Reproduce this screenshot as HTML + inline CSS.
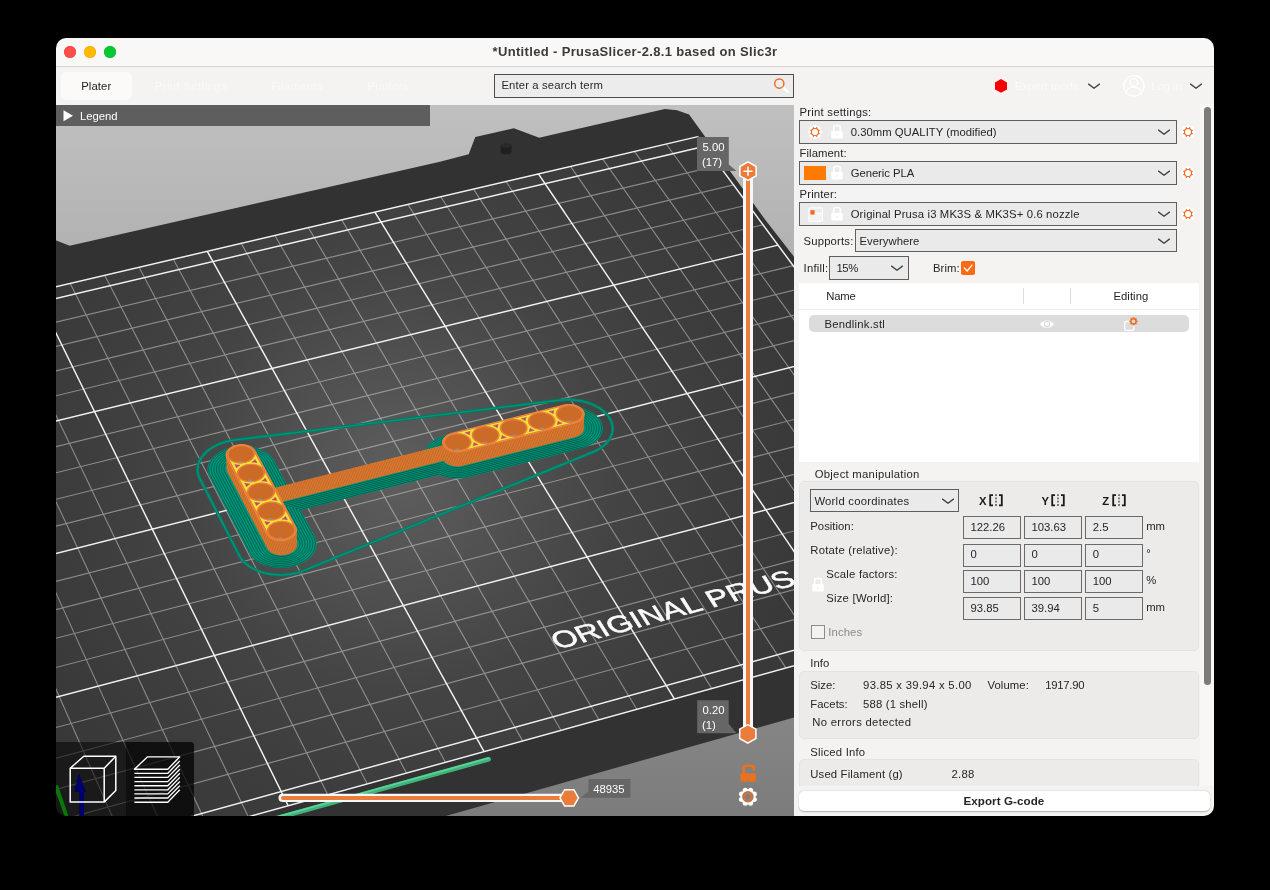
<!DOCTYPE html><html><head><meta charset="utf-8"><title>PrusaSlicer</title>
<style>

html,body{margin:0;padding:0;background:#000;}
body{width:1270px;height:890px;position:relative;overflow:hidden;font-family:"Liberation Sans",sans-serif;font-size:11.3px;color:#262626;}
#win{position:absolute;left:0;top:0;width:1270px;height:890px;will-change:transform;clip-path:inset(38px 56px 74px 56px round 10px);}
#frame{position:absolute;left:56px;top:38px;width:1158px;height:778px;background:#f4f3f2;}
.abs{position:absolute;white-space:nowrap;}
.box{position:absolute;box-sizing:border-box;border:1px solid #5e5e5e;background:#eaeaea;}
.grp{position:absolute;box-sizing:border-box;border:1px solid #e4e3e2;background:#ecebea;border-radius:5px;}

</style></head><body>
<div id="win">
<div id="frame"></div>
<div class="abs" style="left:56px;top:38px;width:1158px;height:28px;background:#f9f8f7;"></div>
<div class="abs" style="left:56px;top:66px;width:1158px;height:1px;background:#d4d3d2;"></div>
<div class="abs" style="left:63.9px;top:45.8px;width:12px;height:12px;border-radius:50%;background:#ff4d4a;box-shadow:inset 0 0 0 0.5px #e83e3b;"></div>
<div class="abs" style="left:83.9px;top:45.8px;width:12px;height:12px;border-radius:50%;background:#ffb900;box-shadow:inset 0 0 0 0.5px #eaa800;"></div>
<div class="abs" style="left:104.1px;top:45.8px;width:12px;height:12px;border-radius:50%;background:#05c832;box-shadow:inset 0 0 0 0.5px #03b52b;"></div>
<div class="abs" style="left:492.5px;top:45px;font-size:13.00px;line-height:14px;color:#3a3a3a;font-weight:bold;letter-spacing:0.345px;">*Untitled - PrusaSlicer-2.8.1 based on Slic3r</div>
<div class="abs" style="left:61.3px;top:72.2px;width:70.5px;height:27.6px;border-radius:5px;background:#fbfaf9;"></div>
<div class="abs" style="left:81.2px;top:79px;font-size:11.30px;line-height:14px;color:#222;letter-spacing:0.113px;">Plater</div>
<div class="abs" style="left:155.0px;top:79px;font-size:11.30px;line-height:14px;color:#faf9f8;letter-spacing:0.342px;">Print Settings</div>
<div class="abs" style="left:271.5px;top:79px;font-size:11.30px;line-height:14px;color:#faf9f8;letter-spacing:0.224px;">Filaments</div>
<div class="abs" style="left:367.5px;top:79px;font-size:11.30px;line-height:14px;color:#faf9f8;letter-spacing:0.258px;">Printers</div>
<div class="box" style="left:494.2px;top:74px;width:299.6px;height:23.6px;border-color:#4d4d4d;background:#ececec;"></div>
<div class="abs" style="left:501.4px;top:78px;font-size:11.30px;line-height:14px;color:#2a2a2a;letter-spacing:0.135px;">Enter a search term</div>
<svg class="abs" style="left:770px;top:75px" width="22" height="22" viewBox="0 0 22 22"><path d="M12.6 12 L17.6 16.6" stroke="#ffffff" stroke-width="2.6" stroke-linecap="round"/><circle cx="9.3" cy="8.6" r="4.6" fill="none" stroke="#ed6b21" stroke-width="1.4"/></svg>
<svg class="abs" style="left:0;top:0" width="1270" height="110" viewBox="0 0 1270 110"><polygon points="1001.0,79.0 995.0,82.5 995.0,89.4 1001.0,92.8 1007.0,89.4 1007.0,82.5" fill="#f80000"/><circle cx="1133.9" cy="85.9" r="10.2" fill="none" stroke="#ffffff" stroke-width="1.3"/><circle cx="1133.9" cy="82.6" r="3.9" fill="none" stroke="#ffffff" stroke-width="1.3"/><path d="M1126.2 92.6 A7.8 6.6 0 0 1 1141.6 92.6" fill="none" stroke="#ffffff" stroke-width="1.3"/></svg>
<div class="abs" style="left:1014.8px;top:79px;font-size:11.30px;line-height:14px;color:#fbfaf9;letter-spacing:0.058px;">Expert mode</div>
<svg class="abs" style="left:1087.7px;top:83.0px" width="12" height="7" viewBox="0 0 12 7"><path d="M0.6 1.1 L6 5.3 L11.4 1.1" fill="none" stroke="#444444" stroke-width="1.35" stroke-linecap="round" stroke-linejoin="round"/></svg>
<div class="abs" style="left:1151.3px;top:79px;font-size:11.30px;line-height:14px;color:#fbfaf9;letter-spacing:0.002px;">Log in</div>
<svg class="abs" style="left:1189.7px;top:83.0px" width="12" height="7" viewBox="0 0 12 7"><path d="M0.6 1.1 L6 5.3 L11.4 1.1" fill="none" stroke="#444444" stroke-width="1.35" stroke-linecap="round" stroke-linejoin="round"/></svg>
<svg id="gl" width="738" height="711" viewBox="56 105 738 711" style="position:absolute;left:56px;top:105px;display:block">
<defs>
<linearGradient id="bg" x1="0" y1="0" x2="0" y2="1"><stop offset="0" stop-color="#c0c0c0"/><stop offset="1" stop-color="#7c7c7c"/></linearGradient>
<radialGradient id="gridg" gradientUnits="userSpaceOnUse" cx="400" cy="475" r="430"><stop offset="0" stop-color="#5e5e5e"/><stop offset="0.25" stop-color="#515151"/><stop offset="0.5" stop-color="#444444"/><stop offset="0.75" stop-color="#3d3d3d"/><stop offset="1" stop-color="#383838"/></radialGradient>
<clipPath id="gridclip"><polygon points="86.3,861.6 1039.0,598.1 697.8,136.6 -140.8,332.7"/></clipPath>
</defs>
<rect x="56" y="105" width="738" height="711" fill="url(#bg)"/>
<polygon points="40.0,240.6 56.3,240.6 69.7,245.7 440.0,161.8 468.7,154.3 475.3,137.1 513.9,128.3 539.2,137.7 664.9,108.9 677.0,110.2 689.1,114.6 704.6,136.0 765.4,220.0 800.0,264.5 800.0,715.9 440.0,817.6 436.0,830.0 40.0,830.0" fill="#323232"/>
<path d="M500.6 145.5 L500.6 152 A5.5 2.3 0 0 0 511.6 152 L511.6 145.5 Z" fill="#1f1f1f"/>
<ellipse cx="506.1" cy="145.5" rx="5.5" ry="2.3" fill="#292929"/>
<polygon points="86.3,861.6 1039.0,598.1 697.8,136.6 -140.8,332.7" fill="url(#gridg)"/>
<path d="M127.2 850.3 L-105.2 324.4M167.8 839.1 L-69.8 316.1M208.2 827.9 L-34.5 307.8M248.3 816.8 L0.6 299.6M327.8 794.8 L70.2 283.4M367.3 783.9 L104.7 275.3M406.4 773.1 L139.1 267.3M445.4 762.3 L173.3 259.3M522.6 740.9 L241.2 243.4M560.9 730.3 L274.9 235.5M599.0 719.8 L308.4 227.7M636.8 709.3 L341.7 219.9M711.8 688.6 L407.9 204.4M749.0 678.3 L440.8 196.7M786.0 668.1 L473.5 189.1M822.7 657.9 L506.0 181.5M895.6 637.7 L570.6 166.4M931.8 627.7 L602.6 158.9M967.7 617.8 L634.5 151.4M1003.4 607.9 L666.2 144.0M67.6 818.1 L1011.1 560.4M55.4 789.6 L992.9 535.8M43.4 761.6 L975.0 511.5M31.5 734.0 L957.3 487.5M8.3 680.0 L922.6 440.7M-3.0 653.6 L905.6 417.7M-14.1 627.7 L888.9 395.1M-25.1 602.1 L872.4 372.8M-46.6 552.0 L840.1 329.0M-57.2 527.5 L824.3 307.6M-67.5 503.3 L808.6 286.5M-77.8 479.5 L793.2 265.6M-97.8 432.9 L763.0 224.8M-107.6 410.1 L748.2 204.7M-117.2 387.6 L733.6 184.9M-126.8 365.4 L719.1 165.4" stroke="#ffffff" stroke-opacity="0.4" stroke-width="1.12" fill="none"/>
<path d="M86.3 861.6 L-140.8 332.7M288.2 805.8 L35.5 291.5M484.1 751.6 L207.3 251.3M674.4 698.9 L374.9 212.1M859.3 647.8 L538.4 173.9M1039.0 598.1 L697.8 136.6M80.1 847.0 L1029.6 585.4M19.8 706.8 L939.8 463.9M-36.0 576.8 L856.1 350.8M-87.8 456.1 L778.0 245.1M-136.2 343.5 L704.9 146.2M86.3 861.6 L1039.0 598.1M-140.8 332.7 L697.8 136.6" stroke="#f2f2f2" stroke-width="1.45" fill="none"/>
<path d="M297.7 572.6 L295.9 573.1 L294.9 573.3 L293.0 573.7 L292.1 573.9 L290.1 574.2 L289.2 574.3 L287.2 574.6 L286.2 574.7 L284.2 574.8 L283.2 574.8 L281.3 574.9 L280.3 574.9 L278.3 574.9 L277.3 574.8 L275.3 574.7 L274.4 574.6 L272.4 574.4 L271.4 574.3 L269.5 574.0 L268.6 573.8 L266.7 573.5 L265.8 573.2 L263.9 572.8 L263.0 572.5 L261.2 572.0 L260.4 571.7 L258.7 571.1 L257.8 570.7 L256.2 570.1 L255.3 569.7 L253.8 568.9 L253.0 568.5 L251.5 567.7 L250.8 567.2 L249.4 566.3 L248.7 565.8 L247.4 564.9 L246.8 564.4 L245.6 563.4 L245.0 562.8 L243.9 561.8 L243.3 561.2 L242.4 560.1 L241.9 559.5 L241.0 558.3 L240.6 557.7 L239.8 556.5 L239.5 555.9 L239.2 555.3 L199.8 478.6 L199.5 478.1 L199.3 477.4 L198.8 476.2 L198.6 475.6 L198.2 474.4 L198.0 473.8 L197.8 472.5 L197.7 471.9 L197.6 470.6 L197.6 470.0 L197.6 468.7 L197.6 468.1 L197.8 466.9 L197.9 466.2 L198.1 465.0 L198.3 464.3 L198.7 463.1 L198.9 462.5 L199.4 461.3 L199.7 460.6 L200.3 459.4 L200.7 458.8 L201.4 457.7 L201.8 457.1 L202.7 455.9 L203.1 455.4 L204.1 454.3 L204.6 453.7 L205.7 452.6 L206.2 452.1 L207.4 451.1 L208.0 450.6 L209.3 449.6 L209.9 449.1 L211.3 448.2 L212.0 447.8 L213.4 446.9 L214.2 446.5 L215.7 445.7 L216.5 445.3 L218.0 444.6 L218.9 444.2 L220.5 443.6 L221.4 443.3 L223.1 442.7 L223.9 442.4 L225.7 441.9 L226.6 441.6 L228.4 441.2 L229.3 441.0 L231.1 440.6 L232.1 440.4 L233.9 440.1 L234.9 440.0 L235.4 439.9 L560.2 400.2 L561.5 400.1 L562.5 400.0 L564.3 399.8 L565.3 399.8 L567.1 399.7 L568.1 399.7 L570.0 399.8 L570.9 399.8 L572.8 399.9 L573.7 400.0 L575.6 400.2 L576.5 400.3 L578.4 400.5 L579.3 400.7 L581.1 401.0 L582.0 401.2 L583.8 401.6 L584.7 401.9 L586.4 402.4 L587.3 402.6 L589.0 403.2 L589.8 403.5 L591.4 404.1 L592.3 404.5 L593.8 405.2 L594.6 405.5 L596.1 406.3 L596.8 406.7 L598.3 407.5 L599.0 407.9 L600.3 408.8 L601.0 409.3 L602.2 410.2 L602.8 410.7 L604.0 411.7 L604.5 412.2 L605.6 413.2 L606.1 413.7 L607.1 414.8 L607.5 415.4 L608.4 416.5 L608.8 417.0 L609.5 418.2 L609.9 418.8 L610.5 419.9 L610.8 420.5 L611.3 421.7 L611.5 422.3 L611.9 423.5 L612.0 424.1 L612.3 425.4 L612.4 426.0 L612.6 427.2 L612.6 427.8 L612.6 429.0 L612.6 429.7 L612.5 430.9 L612.4 431.5 L612.2 432.7 L612.0 433.3 L611.7 434.5 L611.5 435.2 L611.0 436.3 L610.7 436.9 L610.1 438.1 L609.8 438.7 L609.1 439.8 L608.7 440.4 L607.9 441.5 L607.4 442.0 L606.5 443.1 L606.0 443.6 L605.0 444.6 L604.4 445.1 L603.3 446.1 L602.7 446.6 L601.4 447.5 L600.8 447.9 L599.4 448.8 L598.7 449.2 L597.3 450.0 L596.6 450.4 L595.1 451.1 L594.3 451.5 L593.2 451.9 L304.5 570.3 L304.0 570.5 L303.1 570.8 L301.4 571.5 L300.5 571.8 L298.7 572.3Z" fill="none" stroke="#007a63" stroke-width="3.2" stroke-linejoin="round"/>
<path d="M297.7 572.6 L295.9 573.1 L294.9 573.3 L293.0 573.7 L292.1 573.9 L290.1 574.2 L289.2 574.3 L287.2 574.6 L286.2 574.7 L284.2 574.8 L283.2 574.8 L281.3 574.9 L280.3 574.9 L278.3 574.9 L277.3 574.8 L275.3 574.7 L274.4 574.6 L272.4 574.4 L271.4 574.3 L269.5 574.0 L268.6 573.8 L266.7 573.5 L265.8 573.2 L263.9 572.8 L263.0 572.5 L261.2 572.0 L260.4 571.7 L258.7 571.1 L257.8 570.7 L256.2 570.1 L255.3 569.7 L253.8 568.9 L253.0 568.5 L251.5 567.7 L250.8 567.2 L249.4 566.3 L248.7 565.8 L247.4 564.9 L246.8 564.4 L245.6 563.4 L245.0 562.8 L243.9 561.8 L243.3 561.2 L242.4 560.1 L241.9 559.5 L241.0 558.3 L240.6 557.7 L239.8 556.5 L239.5 555.9 L239.2 555.3 L199.8 478.6 L199.5 478.1 L199.3 477.4 L198.8 476.2 L198.6 475.6 L198.2 474.4 L198.0 473.8 L197.8 472.5 L197.7 471.9 L197.6 470.6 L197.6 470.0 L197.6 468.7 L197.6 468.1 L197.8 466.9 L197.9 466.2 L198.1 465.0 L198.3 464.3 L198.7 463.1 L198.9 462.5 L199.4 461.3 L199.7 460.6 L200.3 459.4 L200.7 458.8 L201.4 457.7 L201.8 457.1 L202.7 455.9 L203.1 455.4 L204.1 454.3 L204.6 453.7 L205.7 452.6 L206.2 452.1 L207.4 451.1 L208.0 450.6 L209.3 449.6 L209.9 449.1 L211.3 448.2 L212.0 447.8 L213.4 446.9 L214.2 446.5 L215.7 445.7 L216.5 445.3 L218.0 444.6 L218.9 444.2 L220.5 443.6 L221.4 443.3 L223.1 442.7 L223.9 442.4 L225.7 441.9 L226.6 441.6 L228.4 441.2 L229.3 441.0 L231.1 440.6 L232.1 440.4 L233.9 440.1 L234.9 440.0 L235.4 439.9 L560.2 400.2 L561.5 400.1 L562.5 400.0 L564.3 399.8 L565.3 399.8 L567.1 399.7 L568.1 399.7 L570.0 399.8 L570.9 399.8 L572.8 399.9 L573.7 400.0 L575.6 400.2 L576.5 400.3 L578.4 400.5 L579.3 400.7 L581.1 401.0 L582.0 401.2 L583.8 401.6 L584.7 401.9 L586.4 402.4 L587.3 402.6 L589.0 403.2 L589.8 403.5 L591.4 404.1 L592.3 404.5 L593.8 405.2 L594.6 405.5 L596.1 406.3 L596.8 406.7 L598.3 407.5 L599.0 407.9 L600.3 408.8 L601.0 409.3 L602.2 410.2 L602.8 410.7 L604.0 411.7 L604.5 412.2 L605.6 413.2 L606.1 413.7 L607.1 414.8 L607.5 415.4 L608.4 416.5 L608.8 417.0 L609.5 418.2 L609.9 418.8 L610.5 419.9 L610.8 420.5 L611.3 421.7 L611.5 422.3 L611.9 423.5 L612.0 424.1 L612.3 425.4 L612.4 426.0 L612.6 427.2 L612.6 427.8 L612.6 429.0 L612.6 429.7 L612.5 430.9 L612.4 431.5 L612.2 432.7 L612.0 433.3 L611.7 434.5 L611.5 435.2 L611.0 436.3 L610.7 436.9 L610.1 438.1 L609.8 438.7 L609.1 439.8 L608.7 440.4 L607.9 441.5 L607.4 442.0 L606.5 443.1 L606.0 443.6 L605.0 444.6 L604.4 445.1 L603.3 446.1 L602.7 446.6 L601.4 447.5 L600.8 447.9 L599.4 448.8 L598.7 449.2 L597.3 450.0 L596.6 450.4 L595.1 451.1 L594.3 451.5 L593.2 451.9 L304.5 570.3 L304.0 570.5 L303.1 570.8 L301.4 571.5 L300.5 571.8 L298.7 572.3Z" fill="none" stroke="#00957a" stroke-width="1.3" stroke-linejoin="round"/>
<path d="M208.8 475.3 L208.5 474.5 L208.3 473.9 L208.0 473.1 L207.9 472.4 L207.7 471.6 L207.6 471.0 L207.6 470.2 L207.5 469.5 L207.5 468.7 L207.6 468.0 L207.7 467.2 L207.8 466.6 L207.9 465.8 L208.1 465.1 L208.4 464.3 L208.6 463.7 L208.9 462.9 L209.2 462.3 L209.6 461.5 L209.9 460.9 L210.4 460.1 L210.8 459.5 L211.4 458.8 L211.9 458.2 L212.5 457.5 L213.0 456.9 L213.7 456.2 L214.3 455.7 L215.0 455.0 L215.7 454.5 L216.5 453.9 L217.1 453.4 L218.0 452.8 L218.7 452.3 L219.7 451.8 L220.4 451.3 L221.4 450.8 L222.2 450.4 L223.3 449.9 L224.1 449.6 L225.2 449.1 L226.0 448.8 L227.1 448.4 L228.0 448.1 L229.2 447.8 L230.1 447.6 L231.3 447.3 L232.2 447.0 L233.4 446.8 L234.3 446.6 L235.6 446.4 L236.5 446.3 L237.7 446.2 L238.7 446.1 L240.0 446.0 L240.9 446.0 L242.2 445.9 L243.1 445.9 L244.4 445.9 L245.3 446.0 L246.6 446.0 L247.5 446.1 L248.8 446.2 L249.7 446.4 L250.9 446.5 L251.8 446.7 L253.0 446.9 L253.9 447.1 L255.1 447.4 L256.0 447.6 L257.1 448.0 L257.9 448.2 L259.0 448.6 L259.9 448.9 L260.9 449.4 L261.7 449.7 L262.7 450.2 L263.4 450.6 L264.4 451.1 L265.1 451.5 L266.0 452.0 L266.7 452.5 L267.5 453.1 L268.1 453.6 L268.9 454.2 L269.4 454.7 L270.1 455.3 L270.7 455.9 L271.3 456.6 L271.8 457.1 L272.3 457.8 L272.7 458.4 L273.2 459.1 L273.6 459.7 L273.8 460.1 L287.2 485.1 L424.7 450.3 L424.7 450.2 L425.1 449.5 L425.4 448.8 L425.8 448.1 L426.2 447.5 L426.7 446.7 L427.1 446.2 L427.7 445.5 L428.2 444.9 L428.8 444.2 L429.4 443.7 L430.1 443.0 L430.7 442.5 L431.4 441.9 L432.1 441.4 L432.9 440.8 L433.6 440.4 L434.5 439.8 L435.2 439.4 L436.2 438.9 L436.9 438.5 L437.9 438.0 L438.7 437.6 L439.8 437.2 L440.6 436.9 L441.7 436.5 L442.6 436.2 L443.7 435.9 L444.6 435.6 L445.2 435.5 L556.2 407.5 L556.8 407.3 L557.7 407.1 L558.9 406.9 L559.8 406.7 L561.0 406.6 L561.9 406.4 L563.1 406.3 L564.1 406.2 L565.3 406.1 L566.2 406.1 L567.5 406.0 L568.4 406.0 L569.7 406.1 L570.6 406.1 L571.8 406.2 L572.8 406.2 L574.0 406.4 L575.0 406.5 L576.2 406.6 L577.1 406.8 L578.3 407.0 L579.2 407.2 L580.4 407.5 L581.3 407.7 L582.4 408.0 L583.3 408.3 L584.4 408.7 L585.3 409.0 L586.3 409.4 L587.1 409.7 L588.2 410.2 L589.0 410.6 L589.9 411.1 L590.7 411.5 L591.6 412.0 L592.3 412.5 L593.2 413.0 L593.9 413.5 L594.7 414.1 L595.3 414.6 L596.0 415.2 L596.6 415.8 L597.3 416.4 L597.8 417.0 L598.4 417.7 L598.9 418.2 L599.5 418.9 L599.9 419.5 L600.3 420.3 L600.7 420.9 L601.1 421.6 L601.4 422.2 L601.7 423.0 L601.9 423.6 L602.2 424.4 L602.4 425.0 L602.5 425.8 L602.6 426.4 L602.7 427.3 L602.8 427.9 L602.8 428.7 L602.8 429.3 L602.7 430.1 L602.6 430.7 L602.4 431.5 L602.3 432.2 L602.1 432.9 L601.9 433.5 L601.5 434.3 L601.3 434.9 L600.9 435.7 L600.5 436.3 L600.1 437.0 L599.7 437.6 L599.1 438.3 L598.7 438.8 L598.1 439.5 L597.6 440.1 L596.9 440.7 L596.3 441.2 L595.6 441.9 L595.0 442.3 L594.2 442.9 L593.5 443.4 L592.6 443.9 L591.9 444.4 L591.0 444.9 L590.2 445.3 L589.3 445.8 L588.5 446.1 L587.4 446.6 L586.6 446.9 L585.5 447.3 L584.7 447.6 L583.6 447.9 L582.7 448.1 L582.1 448.3 L469.9 477.0 L469.3 477.1 L468.3 477.3 L467.1 477.6 L466.2 477.8 L465.0 478.0 L464.0 478.1 L462.8 478.2 L461.8 478.3 L460.6 478.4 L459.6 478.5 L458.3 478.5 L457.4 478.5 L456.1 478.5 L455.1 478.4 L453.9 478.4 L452.9 478.3 L451.7 478.2 L450.7 478.0 L449.5 477.9 L448.5 477.7 L447.3 477.5 L446.4 477.3 L445.2 477.0 L444.3 476.7 L443.1 476.4 L442.3 476.1 L441.2 475.7 L440.3 475.4 L439.2 475.0 L439.1 474.9 L300.7 510.2 L314.6 535.9 L314.8 536.3 L315.1 536.9 L315.5 537.8 L315.7 538.4 L316.0 539.2 L316.2 539.9 L316.3 540.7 L316.5 541.4 L316.6 542.3 L316.6 542.9 L316.6 543.8 L316.6 544.5 L316.6 545.3 L316.5 546.0 L316.3 546.9 L316.2 547.5 L316.0 548.4 L315.7 549.0 L315.4 549.9 L315.2 550.5 L314.8 551.4 L314.4 552.0 L314.0 552.8 L313.6 553.5 L313.0 554.2 L312.6 554.9 L311.9 555.6 L311.4 556.2 L310.7 557.0 L310.1 557.5 L309.4 558.2 L308.8 558.8 L307.9 559.5 L307.2 560.0 L306.3 560.6 L305.6 561.1 L304.7 561.7 L303.9 562.1 L302.9 562.7 L302.1 563.1 L301.0 563.6 L300.2 564.0 L299.1 564.5 L298.2 564.8 L297.0 565.3 L296.1 565.6 L294.9 565.9 L294.0 566.2 L292.8 566.5 L291.8 566.7 L290.6 567.0 L289.6 567.2 L288.4 567.4 L287.4 567.5 L286.1 567.7 L285.1 567.8 L283.8 567.9 L282.8 567.9 L281.5 567.9 L280.5 567.9 L279.2 567.9 L278.2 567.9 L276.9 567.8 L275.9 567.7 L274.7 567.6 L273.7 567.5 L272.4 567.3 L271.5 567.1 L270.2 566.9 L269.3 566.6 L268.1 566.3 L267.2 566.1 L266.0 565.7 L265.1 565.4 L264.0 565.0 L263.2 564.7 L262.1 564.2 L261.3 563.9 L260.2 563.4 L259.5 563.0 L258.5 562.4 L257.7 562.0 L256.8 561.4 L256.1 560.9 L255.3 560.3 L254.6 559.8 L253.9 559.1 L253.3 558.6 L252.5 557.9 L252.0 557.3 L251.4 556.6 L250.9 556.0 L250.3 555.2 L249.9 554.6 L249.4 553.8 L249.0 553.2 L248.8 552.8 L209.3 476.3 L209.1 475.9Z" fill="#009479"/>
<path d="M210.0 475.0 L209.7 474.3 L209.5 473.6 L209.3 472.9 L209.1 472.3 L209.0 471.5 L208.9 470.9 L208.8 470.1 L208.8 469.5 L208.8 468.7 L208.8 468.0 L208.9 467.3 L209.0 466.6 L209.2 465.9 L209.3 465.2 L209.6 464.5 L209.8 463.8 L210.1 463.1 L210.4 462.5 L210.8 461.7 L211.1 461.1 L211.6 460.4 L212.0 459.8 L212.5 459.1 L213.0 458.5 L213.6 457.9 L214.1 457.3 L214.7 456.7 L215.3 456.1 L216.0 455.5 L216.6 455.0 L217.4 454.4 L218.1 453.9 L218.9 453.3 L219.6 452.9 L220.5 452.4 L221.2 451.9 L222.2 451.5 L222.9 451.1 L223.9 450.6 L224.7 450.3 L225.7 449.8 L226.6 449.5 L227.7 449.2 L228.5 448.9 L229.6 448.6 L230.5 448.3 L231.6 448.0 L232.6 447.8 L233.7 447.6 L234.6 447.4 L235.8 447.2 L236.7 447.1 L237.9 447.0 L238.8 446.9 L240.0 446.8 L241.0 446.8 L242.1 446.7 L243.1 446.7 L244.3 446.8 L245.2 446.8 L246.4 446.9 L247.3 446.9 L248.5 447.0 L249.4 447.2 L250.5 447.3 L251.5 447.5 L252.6 447.7 L253.5 447.9 L254.6 448.2 L255.5 448.4 L256.5 448.7 L257.4 449.0 L258.4 449.3 L259.2 449.7 L260.2 450.0 L261.0 450.4 L261.9 450.8 L262.6 451.2 L263.5 451.7 L264.2 452.1 L265.1 452.6 L265.7 453.1 L266.5 453.6 L267.1 454.1 L267.9 454.7 L268.4 455.2 L269.1 455.8 L269.6 456.3 L270.2 457.0 L270.7 457.5 L271.2 458.2 L271.6 458.8 L272.0 459.5 L272.4 460.1 L272.6 460.4 L286.5 486.2 L425.7 451.0 L425.9 450.4 L426.3 449.7 L426.6 449.1 L427.0 448.4 L427.3 447.8 L427.8 447.1 L428.2 446.5 L428.8 445.9 L429.3 445.3 L429.9 444.7 L430.4 444.1 L431.1 443.5 L431.7 443.0 L432.4 442.4 L433.0 441.9 L433.8 441.4 L434.5 440.9 L435.3 440.4 L436.1 440.0 L436.9 439.5 L437.7 439.1 L438.6 438.7 L439.4 438.3 L440.4 437.9 L441.3 437.6 L442.3 437.2 L443.1 436.9 L444.2 436.6 L445.1 436.4 L445.6 436.2 L556.7 408.2 L557.3 408.1 L558.2 407.9 L559.2 407.7 L560.2 407.5 L561.3 407.3 L562.2 407.2 L563.3 407.1 L564.3 407.0 L565.4 406.9 L566.4 406.9 L567.5 406.8 L568.5 406.8 L569.6 406.9 L570.6 406.9 L571.7 407.0 L572.7 407.0 L573.8 407.1 L574.8 407.3 L575.9 407.4 L576.8 407.6 L577.9 407.8 L578.9 408.0 L580.0 408.2 L580.9 408.5 L581.9 408.8 L582.8 409.0 L583.8 409.4 L584.7 409.7 L585.7 410.1 L586.5 410.4 L587.5 410.8 L588.2 411.2 L589.2 411.7 L589.9 412.1 L590.8 412.6 L591.5 413.0 L592.3 413.6 L593.0 414.0 L593.7 414.6 L594.3 415.1 L595.0 415.7 L595.6 416.2 L596.3 416.8 L596.8 417.4 L597.4 418.0 L597.8 418.6 L598.3 419.3 L598.7 419.8 L599.2 420.5 L599.5 421.1 L599.9 421.8 L600.2 422.4 L600.5 423.2 L600.7 423.8 L601.0 424.5 L601.1 425.1 L601.3 425.9 L601.4 426.5 L601.5 427.3 L601.5 427.9 L601.5 428.6 L601.5 429.3 L601.4 430.0 L601.4 430.6 L601.2 431.4 L601.1 432.0 L600.8 432.7 L600.6 433.3 L600.3 434.1 L600.1 434.7 L599.7 435.4 L599.4 436.0 L598.9 436.6 L598.5 437.2 L598.0 437.9 L597.6 438.4 L597.0 439.1 L596.5 439.6 L595.9 440.2 L595.3 440.7 L594.6 441.3 L594.0 441.8 L593.2 442.4 L592.6 442.8 L591.8 443.3 L591.1 443.8 L590.2 444.2 L589.4 444.6 L588.5 445.1 L587.7 445.4 L586.8 445.8 L586.0 446.2 L584.9 446.5 L584.1 446.8 L583.1 447.1 L582.2 447.4 L581.6 447.5 L469.4 476.2 L468.8 476.3 L467.9 476.6 L466.8 476.8 L465.9 477.0 L464.7 477.1 L463.8 477.3 L462.6 477.4 L461.6 477.5 L460.5 477.6 L459.5 477.6 L458.3 477.7 L457.3 477.7 L456.2 477.6 L455.2 477.6 L454.0 477.5 L453.1 477.5 L451.9 477.3 L450.9 477.2 L449.8 477.1 L448.8 476.9 L447.7 476.7 L446.8 476.5 L445.7 476.2 L444.8 476.0 L443.7 475.6 L442.8 475.4 L441.8 475.0 L440.9 474.7 L439.9 474.3 L439.3 474.0 L299.1 509.7 L313.4 536.2 L313.6 536.6 L313.9 537.2 L314.2 538.0 L314.5 538.6 L314.7 539.4 L314.9 540.1 L315.1 540.9 L315.2 541.5 L315.3 542.3 L315.3 543.0 L315.3 543.8 L315.3 544.5 L315.3 545.3 L315.2 546.0 L315.1 546.8 L314.9 547.4 L314.7 548.2 L314.5 548.9 L314.2 549.7 L313.9 550.3 L313.5 551.1 L313.2 551.7 L312.8 552.5 L312.4 553.1 L311.9 553.9 L311.4 554.5 L310.8 555.2 L310.3 555.8 L309.7 556.5 L309.1 557.0 L308.4 557.7 L307.7 558.2 L307.0 558.9 L306.3 559.4 L305.4 560.0 L304.7 560.5 L303.8 561.0 L303.1 561.5 L302.1 562.0 L301.3 562.4 L300.3 562.9 L299.5 563.3 L298.4 563.7 L297.6 564.1 L296.5 564.5 L295.6 564.8 L294.5 565.1 L293.5 565.4 L292.4 565.7 L291.4 565.9 L290.3 566.1 L289.3 566.3 L288.1 566.5 L287.1 566.7 L285.9 566.8 L284.9 566.9 L283.7 567.0 L282.7 567.0 L281.5 567.1 L280.5 567.1 L279.3 567.0 L278.3 567.0 L277.1 566.9 L276.1 566.9 L274.9 566.7 L274.0 566.6 L272.8 566.4 L271.8 566.3 L270.7 566.0 L269.7 565.8 L268.6 565.5 L267.7 565.3 L266.6 564.9 L265.7 564.6 L264.7 564.3 L263.8 563.9 L262.8 563.5 L262.0 563.1 L261.0 562.7 L260.3 562.3 L259.4 561.7 L258.6 561.3 L257.8 560.8 L257.1 560.3 L256.3 559.7 L255.6 559.2 L254.9 558.6 L254.3 558.0 L253.6 557.4 L253.1 556.8 L252.5 556.1 L252.0 555.5 L251.5 554.8 L251.1 554.2 L250.6 553.5 L250.3 552.9 L250.0 552.5 L210.5 476.0 L210.3 475.6ZM212.5 474.4 L212.2 473.8 L212.0 473.2 L211.8 472.5 L211.6 471.9 L211.5 471.3 L211.4 470.6 L211.4 470.0 L211.3 469.3 L211.3 468.7 L211.4 468.0 L211.4 467.4 L211.5 466.7 L211.7 466.1 L211.8 465.4 L212.0 464.8 L212.3 464.1 L212.5 463.5 L212.8 462.9 L213.1 462.3 L213.5 461.6 L213.9 461.0 L214.3 460.4 L214.7 459.8 L215.2 459.3 L215.7 458.7 L216.2 458.1 L216.8 457.6 L217.3 457.0 L217.9 456.5 L218.6 456.0 L219.2 455.5 L219.9 455.0 L220.6 454.5 L221.3 454.0 L222.1 453.6 L222.8 453.2 L223.6 452.8 L224.4 452.4 L225.2 452.0 L226.1 451.6 L226.9 451.3 L227.8 450.9 L228.7 450.6 L229.6 450.3 L230.5 450.1 L231.4 449.8 L232.4 449.6 L233.3 449.4 L234.2 449.2 L235.2 449.0 L236.2 448.9 L237.1 448.7 L238.1 448.6 L239.1 448.5 L240.1 448.5 L241.1 448.4 L242.1 448.4 L243.0 448.4 L244.0 448.4 L245.0 448.4 L246.0 448.5 L246.9 448.6 L247.9 448.7 L248.9 448.8 L249.8 448.9 L250.8 449.1 L251.7 449.3 L252.6 449.5 L253.5 449.7 L254.4 449.9 L255.3 450.2 L256.2 450.5 L257.1 450.8 L257.9 451.1 L258.7 451.4 L259.5 451.8 L260.3 452.1 L261.1 452.5 L261.8 452.9 L262.5 453.4 L263.2 453.8 L263.9 454.2 L264.6 454.7 L265.2 455.2 L265.8 455.7 L266.4 456.2 L267.0 456.7 L267.5 457.3 L268.0 457.8 L268.4 458.4 L268.9 458.9 L269.3 459.5 L269.7 460.1 L270.0 460.7 L270.2 461.0 L284.9 488.3 L427.9 452.2 L427.9 452.1 L428.1 451.5 L428.4 450.8 L428.7 450.2 L429.0 449.6 L429.3 449.0 L429.7 448.4 L430.1 447.8 L430.5 447.2 L431.0 446.7 L431.4 446.1 L432.0 445.6 L432.5 445.0 L433.1 444.5 L433.7 444.0 L434.3 443.5 L434.9 443.0 L435.6 442.5 L436.3 442.1 L437.0 441.6 L437.7 441.2 L438.5 440.8 L439.2 440.4 L440.1 440.0 L440.9 439.7 L441.7 439.3 L442.5 439.0 L443.4 438.7 L444.3 438.4 L445.2 438.1 L446.1 437.9 L446.5 437.8 L557.7 409.7 L558.1 409.6 L559.0 409.4 L560.0 409.2 L560.9 409.1 L561.8 408.9 L562.8 408.8 L563.7 408.7 L564.7 408.6 L565.7 408.5 L566.6 408.5 L567.6 408.4 L568.6 408.4 L569.5 408.5 L570.5 408.5 L571.5 408.5 L572.4 408.6 L573.4 408.7 L574.4 408.8 L575.3 409.0 L576.3 409.1 L577.2 409.3 L578.2 409.5 L579.1 409.7 L580.0 410.0 L580.9 410.2 L581.8 410.5 L582.7 410.8 L583.5 411.1 L584.4 411.4 L585.2 411.8 L586.0 412.1 L586.8 412.5 L587.6 412.9 L588.3 413.3 L589.1 413.7 L589.8 414.2 L590.5 414.6 L591.2 415.1 L591.8 415.6 L592.4 416.1 L593.0 416.6 L593.6 417.1 L594.2 417.7 L594.7 418.2 L595.2 418.8 L595.6 419.3 L596.1 419.9 L596.5 420.5 L596.9 421.1 L597.2 421.7 L597.5 422.3 L597.8 422.9 L598.1 423.5 L598.3 424.1 L598.5 424.7 L598.7 425.4 L598.8 426.0 L598.9 426.6 L599.0 427.3 L599.0 427.9 L599.0 428.5 L599.0 429.2 L598.9 429.8 L598.9 430.4 L598.7 431.1 L598.6 431.7 L598.4 432.3 L598.2 432.9 L597.9 433.6 L597.7 434.2 L597.4 434.8 L597.0 435.3 L596.6 435.9 L596.3 436.5 L595.8 437.1 L595.4 437.6 L594.9 438.2 L594.4 438.7 L593.8 439.2 L593.3 439.8 L592.7 440.3 L592.0 440.7 L591.4 441.2 L590.7 441.7 L590.0 442.1 L589.3 442.5 L588.6 443.0 L587.8 443.3 L587.1 443.7 L586.3 444.1 L585.4 444.4 L584.6 444.8 L583.8 445.1 L582.9 445.4 L582.0 445.6 L581.1 445.9 L580.7 446.0 L468.5 474.6 L468.0 474.8 L467.1 475.0 L466.1 475.2 L465.2 475.3 L464.2 475.5 L463.2 475.6 L462.2 475.7 L461.3 475.8 L460.3 475.9 L459.3 476.0 L458.3 476.0 L457.3 476.0 L456.3 476.0 L455.3 475.9 L454.3 475.9 L453.4 475.8 L452.4 475.7 L451.4 475.6 L450.4 475.4 L449.5 475.3 L448.5 475.1 L447.6 474.9 L446.6 474.7 L445.7 474.4 L444.8 474.1 L443.9 473.9 L443.0 473.6 L442.2 473.2 L441.3 472.9 L440.5 472.5 L439.7 472.2 L439.6 472.1 L295.8 508.7 L311.0 536.8 L311.1 537.2 L311.4 537.8 L311.7 538.5 L312.0 539.1 L312.2 539.8 L312.3 540.4 L312.5 541.1 L312.6 541.8 L312.7 542.5 L312.7 543.1 L312.8 543.8 L312.7 544.5 L312.7 545.2 L312.6 545.9 L312.5 546.5 L312.3 547.2 L312.2 547.9 L312.0 548.6 L311.7 549.2 L311.4 549.9 L311.1 550.6 L310.8 551.2 L310.4 551.8 L310.0 552.5 L309.6 553.1 L309.1 553.7 L308.6 554.3 L308.1 554.9 L307.5 555.5 L306.9 556.1 L306.3 556.7 L305.7 557.2 L305.0 557.7 L304.4 558.3 L303.6 558.8 L302.9 559.2 L302.2 559.7 L301.4 560.2 L300.6 560.6 L299.8 561.0 L298.9 561.5 L298.1 561.8 L297.2 562.2 L296.3 562.6 L295.4 562.9 L294.5 563.2 L293.5 563.5 L292.6 563.8 L291.6 564.0 L290.7 564.2 L289.7 564.4 L288.7 564.6 L287.7 564.8 L286.7 564.9 L285.7 565.1 L284.7 565.1 L283.6 565.2 L282.6 565.3 L281.6 565.3 L280.6 565.3 L279.6 565.3 L278.6 565.3 L277.5 565.2 L276.5 565.1 L275.5 565.0 L274.5 564.9 L273.5 564.7 L272.6 564.5 L271.6 564.3 L270.6 564.1 L269.7 563.9 L268.8 563.6 L267.8 563.4 L266.9 563.1 L266.0 562.7 L265.2 562.4 L264.3 562.0 L263.5 561.7 L262.7 561.3 L261.9 560.9 L261.1 560.4 L260.4 560.0 L259.7 559.5 L259.0 559.0 L258.3 558.5 L257.6 558.0 L257.0 557.5 L256.4 556.9 L255.8 556.4 L255.3 555.8 L254.8 555.2 L254.3 554.7 L253.8 554.0 L253.4 553.4 L253.0 552.8 L252.7 552.2 L252.5 551.9 L212.9 475.4 L212.7 475.1ZM214.9 473.9 L214.7 473.4 L214.5 472.7 L214.3 472.2 L214.1 471.6 L214.0 471.0 L213.9 470.4 L213.9 469.8 L213.9 469.2 L213.9 468.7 L213.9 468.0 L214.0 467.5 L214.1 466.8 L214.2 466.3 L214.3 465.6 L214.5 465.1 L214.7 464.5 L214.9 463.9 L215.2 463.3 L215.5 462.8 L215.8 462.2 L216.2 461.6 L216.6 461.1 L216.9 460.6 L217.4 460.0 L217.8 459.5 L218.3 458.9 L218.8 458.5 L219.4 457.9 L219.9 457.5 L220.5 457.0 L221.1 456.5 L221.7 456.1 L222.3 455.7 L223.0 455.2 L223.7 454.8 L224.4 454.4 L225.1 454.0 L225.9 453.7 L226.6 453.3 L227.4 453.0 L228.1 452.7 L229.0 452.4 L229.7 452.1 L230.6 451.8 L231.4 451.6 L232.3 451.3 L233.1 451.1 L234.0 450.9 L234.8 450.8 L235.8 450.6 L236.6 450.5 L237.5 450.3 L238.4 450.2 L239.3 450.2 L240.2 450.1 L241.1 450.0 L242.0 450.0 L242.9 450.0 L243.8 450.0 L244.7 450.1 L245.6 450.1 L246.5 450.2 L247.4 450.3 L248.3 450.4 L249.1 450.5 L250.0 450.7 L250.8 450.8 L251.7 451.0 L252.5 451.2 L253.4 451.5 L254.2 451.7 L255.0 451.9 L255.7 452.2 L256.6 452.5 L257.3 452.8 L258.1 453.1 L258.7 453.5 L259.5 453.8 L260.1 454.2 L260.8 454.6 L261.4 455.0 L262.1 455.4 L262.6 455.8 L263.3 456.3 L263.8 456.7 L264.4 457.2 L264.8 457.7 L265.3 458.2 L265.8 458.7 L266.2 459.2 L266.6 459.7 L267.0 460.3 L267.3 460.8 L267.7 461.3 L267.8 461.6 L283.3 490.5 L430.1 453.4 L430.2 453.0 L430.4 452.4 L430.6 451.9 L430.8 451.3 L431.0 450.7 L431.3 450.1 L431.6 449.6 L432.0 449.0 L432.3 448.5 L432.8 448.0 L433.2 447.5 L433.6 446.9 L434.1 446.5 L434.6 445.9 L435.1 445.5 L435.7 445.0 L436.2 444.6 L436.8 444.1 L437.4 443.7 L438.1 443.2 L438.7 442.8 L439.4 442.4 L440.0 442.1 L440.8 441.7 L441.5 441.4 L442.3 441.0 L443.0 440.7 L443.8 440.4 L444.5 440.1 L445.4 439.9 L446.2 439.6 L447.0 439.4 L447.4 439.3 L558.6 411.2 L559.0 411.1 L559.9 410.9 L560.7 410.8 L561.6 410.6 L562.4 410.5 L563.3 410.3 L564.1 410.3 L565.1 410.2 L565.9 410.1 L566.9 410.1 L567.7 410.0 L568.6 410.0 L569.5 410.1 L570.4 410.1 L571.3 410.1 L572.2 410.2 L573.0 410.3 L574.0 410.4 L574.8 410.5 L575.7 410.7 L576.5 410.8 L577.4 411.0 L578.2 411.2 L579.1 411.4 L579.9 411.7 L580.8 411.9 L581.5 412.2 L582.4 412.5 L583.1 412.8 L583.9 413.1 L584.6 413.4 L585.4 413.8 L586.0 414.1 L586.8 414.5 L587.4 414.9 L588.1 415.3 L588.7 415.7 L589.3 416.2 L589.9 416.6 L590.5 417.1 L591.0 417.5 L591.6 418.0 L592.0 418.5 L592.6 419.0 L593.0 419.5 L593.4 420.0 L593.8 420.5 L594.2 421.1 L594.5 421.6 L594.9 422.2 L595.2 422.7 L595.4 423.3 L595.7 423.8 L595.9 424.4 L596.0 425.0 L596.2 425.6 L596.3 426.1 L596.4 426.8 L596.5 427.3 L596.5 427.9 L596.5 428.5 L596.5 429.1 L596.5 429.6 L596.4 430.2 L596.3 430.8 L596.1 431.4 L596.0 431.9 L595.7 432.5 L595.5 433.0 L595.3 433.6 L595.0 434.2 L594.7 434.7 L594.4 435.2 L594.0 435.8 L593.6 436.3 L593.1 436.8 L592.7 437.3 L592.2 437.8 L591.8 438.3 L591.2 438.8 L590.7 439.2 L590.1 439.7 L589.6 440.1 L588.9 440.5 L588.3 440.9 L587.6 441.3 L587.0 441.7 L586.2 442.1 L585.6 442.4 L584.8 442.7 L584.1 443.0 L583.3 443.3 L582.6 443.6 L581.7 443.9 L581.0 444.1 L580.1 444.4 L579.7 444.5 L467.5 473.1 L467.1 473.2 L466.2 473.4 L465.4 473.6 L464.5 473.7 L463.7 473.9 L462.7 474.0 L461.9 474.1 L460.9 474.2 L460.1 474.2 L459.1 474.3 L458.3 474.3 L457.3 474.3 L456.4 474.3 L455.5 474.3 L454.6 474.2 L453.7 474.1 L452.8 474.1 L451.9 473.9 L451.0 473.8 L450.1 473.7 L449.3 473.5 L448.4 473.3 L447.6 473.1 L446.7 472.9 L445.9 472.6 L445.0 472.4 L444.3 472.1 L443.4 471.8 L442.7 471.5 L441.9 471.1 L441.2 470.8 L440.4 470.4 L440.0 470.2 L292.6 507.7 L308.5 537.5 L308.7 537.7 L309.0 538.4 L309.2 538.9 L309.4 539.6 L309.6 540.1 L309.8 540.8 L309.9 541.3 L310.0 542.0 L310.1 542.6 L310.2 543.3 L310.2 543.8 L310.2 544.5 L310.1 545.1 L310.0 545.8 L309.9 546.3 L309.8 547.0 L309.6 547.6 L309.4 548.2 L309.2 548.8 L308.9 549.5 L308.7 550.0 L308.3 550.6 L308.0 551.2 L307.6 551.8 L307.3 552.3 L306.8 553.0 L306.4 553.5 L305.9 554.1 L305.4 554.6 L304.8 555.1 L304.3 555.6 L303.7 556.1 L303.1 556.6 L302.4 557.1 L301.8 557.5 L301.1 558.0 L300.5 558.4 L299.7 558.9 L299.0 559.2 L298.2 559.7 L297.5 560.0 L296.7 560.4 L295.9 560.7 L295.1 561.0 L294.3 561.3 L293.4 561.6 L292.6 561.9 L291.6 562.1 L290.8 562.4 L289.9 562.6 L289.0 562.8 L288.1 562.9 L287.2 563.1 L286.2 563.2 L285.4 563.3 L284.4 563.4 L283.5 563.5 L282.5 563.5 L281.7 563.5 L280.6 563.5 L279.8 563.5 L278.8 563.5 L277.9 563.4 L276.9 563.4 L276.1 563.3 L275.1 563.1 L274.3 563.0 L273.3 562.8 L272.5 562.7 L271.5 562.5 L270.7 562.3 L269.8 562.0 L269.0 561.8 L268.2 561.5 L267.4 561.2 L266.5 560.9 L265.8 560.6 L265.0 560.2 L264.3 559.9 L263.5 559.5 L262.9 559.1 L262.2 558.6 L261.5 558.3 L260.8 557.8 L260.3 557.4 L259.6 556.8 L259.1 556.4 L258.5 555.9 L258.0 555.4 L257.5 554.8 L257.1 554.3 L256.6 553.8 L256.2 553.3 L255.8 552.7 L255.5 552.1 L255.1 551.5 L254.9 551.2 L215.3 474.8 L215.2 474.5ZM217.3 473.3 L217.1 472.9 L216.9 472.3 L216.8 471.9 L216.6 471.2 L216.6 470.8 L216.5 470.2 L216.4 469.7 L216.4 469.1 L216.4 468.6 L216.4 468.0 L216.5 467.6 L216.6 466.9 L216.7 466.5 L216.8 465.8 L217.0 465.4 L217.2 464.8 L217.4 464.3 L217.6 463.7 L217.9 463.3 L218.2 462.7 L218.5 462.3 L218.9 461.7 L219.2 461.3 L219.6 460.7 L220.0 460.3 L220.5 459.7 L220.9 459.4 L221.4 458.8 L221.8 458.5 L222.5 458.0 L222.9 457.6 L223.6 457.1 L224.0 456.8 L224.8 456.4 L225.3 456.1 L226.0 455.6 L226.5 455.3 L227.3 455.0 L227.9 454.7 L228.7 454.3 L229.3 454.1 L230.2 453.8 L230.8 453.6 L231.6 453.3 L232.3 453.1 L233.2 452.8 L233.8 452.7 L234.7 452.5 L235.4 452.3 L236.3 452.2 L237.0 452.1 L238.0 451.9 L238.6 451.9 L239.6 451.8 L240.3 451.7 L241.2 451.7 L241.9 451.7 L242.9 451.7 L243.5 451.7 L244.5 451.7 L245.2 451.7 L246.1 451.8 L246.8 451.9 L247.7 452.0 L248.4 452.1 L249.3 452.3 L250.0 452.4 L250.9 452.6 L251.5 452.7 L252.4 453.0 L253.0 453.2 L253.8 453.4 L254.4 453.6 L255.3 453.9 L255.8 454.2 L256.6 454.5 L257.1 454.8 L257.9 455.2 L258.4 455.4 L259.1 455.9 L259.6 456.2 L260.3 456.6 L260.7 456.9 L261.3 457.4 L261.7 457.7 L262.3 458.2 L262.7 458.6 L263.2 459.1 L263.6 459.5 L264.0 460.0 L264.3 460.4 L264.7 461.0 L265.0 461.4 L265.3 462.0 L265.5 462.2 L281.8 492.7 L432.4 454.6 L432.4 454.4 L432.6 453.8 L432.7 453.3 L432.8 452.7 L433.0 452.3 L433.2 451.7 L433.4 451.3 L433.7 450.6 L434.0 450.2 L434.3 449.6 L434.6 449.2 L435.0 448.7 L435.3 448.3 L435.8 447.7 L436.2 447.4 L436.7 446.8 L437.1 446.5 L437.7 446.0 L438.1 445.6 L438.7 445.1 L439.2 444.8 L439.9 444.4 L440.3 444.1 L441.1 443.6 L441.6 443.4 L442.3 443.0 L442.9 442.7 L443.7 442.4 L444.2 442.1 L445.1 441.8 L445.7 441.6 L446.5 441.3 L447.1 441.1 L448.0 440.9 L448.3 440.8 L559.6 412.7 L559.9 412.6 L560.8 412.4 L561.4 412.3 L562.3 412.1 L563.0 412.0 L563.9 411.9 L564.5 411.8 L565.5 411.8 L566.2 411.7 L567.1 411.7 L567.8 411.7 L568.7 411.6 L569.4 411.7 L570.4 411.7 L571.0 411.7 L572.0 411.8 L572.6 411.9 L573.6 412.0 L574.2 412.1 L575.2 412.2 L575.8 412.4 L576.7 412.6 L577.4 412.7 L578.3 412.9 L578.9 413.1 L579.7 413.4 L580.3 413.6 L581.2 413.9 L581.8 414.1 L582.6 414.4 L583.1 414.7 L583.9 415.1 L584.5 415.3 L585.2 415.7 L585.7 416.0 L586.4 416.5 L586.9 416.8 L587.5 417.2 L588.0 417.6 L588.6 418.1 L589.0 418.4 L589.6 418.9 L589.9 419.3 L590.5 419.8 L590.8 420.2 L591.2 420.8 L591.5 421.2 L591.9 421.7 L592.2 422.1 L592.6 422.7 L592.8 423.1 L593.1 423.7 L593.2 424.2 L593.5 424.8 L593.6 425.2 L593.8 425.8 L593.8 426.2 L593.9 426.9 L594.0 427.3 L594.0 427.9 L594.0 428.4 L594.0 429.0 L594.0 429.4 L593.9 430.0 L593.8 430.5 L593.6 431.1 L593.5 431.5 L593.3 432.1 L593.1 432.5 L592.9 433.1 L592.7 433.5 L592.3 434.1 L592.1 434.5 L591.7 435.1 L591.4 435.5 L590.9 436.0 L590.6 436.4 L590.1 436.9 L589.7 437.3 L589.2 437.8 L588.8 438.1 L588.2 438.6 L587.7 438.9 L587.1 439.4 L586.6 439.7 L585.9 440.1 L585.4 440.4 L584.6 440.8 L584.1 441.0 L583.3 441.4 L582.8 441.6 L581.9 441.9 L581.4 442.1 L580.5 442.4 L579.9 442.6 L579.0 442.9 L578.7 442.9 L466.6 471.5 L466.3 471.6 L465.4 471.8 L464.7 472.0 L463.8 472.1 L463.1 472.2 L462.2 472.4 L461.5 472.4 L460.6 472.5 L459.9 472.6 L458.9 472.6 L458.2 472.6 L457.3 472.7 L456.6 472.6 L455.6 472.6 L454.9 472.6 L454.0 472.5 L453.3 472.4 L452.3 472.3 L451.7 472.2 L450.7 472.0 L450.1 471.9 L449.1 471.7 L448.5 471.6 L447.6 471.3 L447.0 471.1 L446.1 470.9 L445.5 470.7 L444.7 470.3 L444.1 470.1 L443.3 469.8 L442.7 469.5 L441.9 469.1 L441.4 468.8 L440.7 468.4 L440.5 468.3 L289.3 506.8 L306.1 538.1 L306.2 538.3 L306.5 538.9 L306.7 539.4 L306.9 540.0 L307.1 540.5 L307.3 541.1 L307.4 541.6 L307.5 542.3 L307.5 542.7 L307.6 543.4 L307.6 543.8 L307.6 544.5 L307.5 545.0 L307.5 545.7 L307.4 546.1 L307.2 546.8 L307.1 547.2 L306.9 547.9 L306.7 548.4 L306.5 549.0 L306.2 549.5 L305.9 550.1 L305.6 550.5 L305.2 551.2 L304.9 551.6 L304.5 552.2 L304.2 552.6 L303.6 553.2 L303.3 553.6 L302.7 554.2 L302.3 554.5 L301.7 555.1 L301.2 555.4 L300.5 556.0 L300.0 556.3 L299.3 556.8 L298.8 557.1 L298.0 557.6 L297.5 557.9 L296.7 558.3 L296.1 558.6 L295.3 558.9 L294.7 559.2 L293.8 559.5 L293.2 559.8 L292.3 560.1 L291.6 560.3 L290.7 560.5 L290.0 560.7 L289.1 560.9 L288.4 561.1 L287.4 561.2 L286.8 561.3 L285.8 561.5 L285.1 561.6 L284.1 561.7 L283.4 561.7 L282.4 561.8 L281.7 561.8 L280.7 561.8 L280.0 561.8 L279.0 561.7 L278.3 561.7 L277.3 561.6 L276.7 561.5 L275.7 561.4 L275.0 561.3 L274.0 561.1 L273.4 561.0 L272.4 560.8 L271.8 560.6 L270.9 560.4 L270.3 560.2 L269.4 559.9 L268.8 559.7 L267.9 559.3 L267.3 559.1 L266.5 558.7 L266.0 558.5 L265.2 558.1 L264.6 557.8 L263.9 557.3 L263.4 557.0 L262.7 556.5 L262.3 556.2 L261.6 555.7 L261.2 555.3 L260.6 554.8 L260.2 554.4 L259.7 553.9 L259.3 553.5 L258.9 552.9 L258.6 552.5 L258.1 551.9 L257.9 551.4 L257.5 550.8 L257.4 550.6 L217.7 474.2 L217.6 474.0ZM219.7 472.8 L219.6 472.5 L219.4 471.9 L219.3 471.5 L219.1 470.9 L219.1 470.6 L219.0 469.9 L218.9 469.6 L218.9 469.0 L218.9 468.6 L218.9 468.0 L219.0 467.6 L219.1 467.0 L219.1 466.7 L219.3 466.0 L219.4 465.7 L219.6 465.1 L219.8 464.7 L220.1 464.1 L220.2 463.8 L220.6 463.2 L220.8 462.9 L221.2 462.3 L221.4 462.0 L221.8 461.4 L222.1 461.1 L222.6 460.6 L222.9 460.3 L223.5 459.7 L223.8 459.5 L224.4 459.0 L224.7 458.7 L225.4 458.2 L225.8 458.0 L226.5 457.5 L226.9 457.3 L227.6 456.9 L228.0 456.6 L228.8 456.3 L229.2 456.1 L230.0 455.7 L230.5 455.5 L231.3 455.2 L231.8 455.0 L232.7 454.8 L233.2 454.6 L234.1 454.4 L234.5 454.2 L235.5 454.0 L236.0 453.9 L236.9 453.8 L237.4 453.7 L238.4 453.6 L238.9 453.5 L239.8 453.4 L240.3 453.4 L241.3 453.3 L241.8 453.3 L242.8 453.3 L243.3 453.3 L244.3 453.4 L244.8 453.4 L245.7 453.5 L246.2 453.5 L247.2 453.6 L247.7 453.7 L248.6 453.9 L249.1 454.0 L250.0 454.2 L250.5 454.3 L251.3 454.5 L251.8 454.6 L252.7 454.9 L253.1 455.1 L253.9 455.4 L254.4 455.6 L255.1 455.9 L255.6 456.1 L256.3 456.5 L256.7 456.7 L257.4 457.1 L257.8 457.3 L258.4 457.8 L258.8 458.0 L259.4 458.5 L259.7 458.8 L260.3 459.3 L260.6 459.5 L261.1 460.1 L261.3 460.3 L261.8 460.9 L262.0 461.2 L262.4 461.7 L262.6 462.1 L263.0 462.6 L263.1 462.8 L280.2 494.9 L434.8 455.7 L434.8 455.6 L434.9 454.9 L434.9 454.6 L435.1 454.0 L435.1 453.7 L435.3 453.0 L435.4 452.7 L435.7 452.1 L435.8 451.8 L436.1 451.2 L436.3 450.9 L436.7 450.3 L436.9 450.0 L437.3 449.4 L437.5 449.1 L438.0 448.5 L438.3 448.3 L438.8 447.7 L439.1 447.5 L439.7 447.0 L440.0 446.7 L440.6 446.2 L441.0 446.0 L441.6 445.5 L442.0 445.3 L442.7 444.9 L443.1 444.7 L443.9 444.3 L444.3 444.1 L445.1 443.7 L445.5 443.5 L446.4 443.2 L446.8 443.1 L447.7 442.8 L448.1 442.6 L449.0 442.4 L449.2 442.3 L560.5 414.2 L560.8 414.2 L561.7 414.0 L562.1 413.9 L563.0 413.7 L563.5 413.6 L564.5 413.5 L565.0 413.4 L565.9 413.4 L566.4 413.3 L567.4 413.3 L567.9 413.3 L568.8 413.3 L569.3 413.3 L570.3 413.3 L570.8 413.3 L571.7 413.4 L572.2 413.5 L573.2 413.6 L573.7 413.6 L574.6 413.8 L575.1 413.9 L576.0 414.1 L576.5 414.2 L577.4 414.4 L577.8 414.6 L578.7 414.8 L579.2 415.0 L580.0 415.3 L580.5 415.4 L581.3 415.8 L581.7 416.0 L582.5 416.4 L582.9 416.6 L583.6 417.0 L584.0 417.2 L584.7 417.6 L585.1 417.9 L585.7 418.3 L586.1 418.6 L586.7 419.1 L587.0 419.3 L587.5 419.8 L587.8 420.1 L588.3 420.6 L588.6 420.9 L589.1 421.5 L589.3 421.8 L589.7 422.4 L589.9 422.7 L590.2 423.3 L590.4 423.6 L590.7 424.2 L590.8 424.5 L591.0 425.1 L591.1 425.4 L591.3 426.0 L591.4 426.4 L591.5 427.0 L591.5 427.3 L591.5 427.9 L591.5 428.3 L591.5 428.9 L591.5 429.2 L591.4 429.8 L591.3 430.2 L591.2 430.8 L591.1 431.1 L590.9 431.7 L590.7 432.0 L590.5 432.6 L590.3 432.9 L590.0 433.5 L589.8 433.8 L589.4 434.4 L589.2 434.7 L588.7 435.2 L588.5 435.5 L588.0 436.0 L587.7 436.3 L587.1 436.8 L586.8 437.1 L586.2 437.5 L585.9 437.8 L585.2 438.2 L584.9 438.5 L584.2 438.9 L583.8 439.1 L583.0 439.5 L582.6 439.7 L581.9 440.0 L581.4 440.2 L580.6 440.5 L580.2 440.7 L579.3 441.0 L578.9 441.1 L578.0 441.4 L577.8 441.4 L465.7 470.0 L465.5 470.0 L464.5 470.3 L464.0 470.4 L463.1 470.5 L462.6 470.6 L461.7 470.7 L461.2 470.8 L460.2 470.9 L459.7 470.9 L458.7 471.0 L458.2 471.0 L457.2 471.0 L456.7 471.0 L455.7 470.9 L455.2 470.9 L454.3 470.8 L453.8 470.8 L452.8 470.7 L452.3 470.6 L451.4 470.4 L450.9 470.3 L449.9 470.1 L449.5 470.0 L448.5 469.8 L448.1 469.6 L447.2 469.4 L446.8 469.2 L445.9 468.9 L445.5 468.7 L444.6 468.4 L444.2 468.2 L443.5 467.8 L443.1 467.6 L442.3 467.2 L441.9 466.9 L441.2 466.5 L441.1 466.4 L286.1 505.8 L303.7 538.7 L303.8 538.9 L304.1 539.5 L304.2 539.8 L304.4 540.5 L304.5 540.8 L304.7 541.5 L304.8 541.8 L304.9 542.5 L305.0 542.8 L305.0 543.5 L305.0 543.9 L305.0 544.5 L305.0 544.9 L304.9 545.6 L304.8 545.9 L304.7 546.6 L304.6 546.9 L304.4 547.6 L304.2 547.9 L304.0 548.6 L303.8 548.9 L303.5 549.6 L303.3 549.9 L302.9 550.5 L302.6 550.8 L302.2 551.4 L301.9 551.8 L301.4 552.3 L301.1 552.6 L300.6 553.2 L300.2 553.5 L299.6 554.0 L299.3 554.3 L298.6 554.8 L298.2 555.1 L297.5 555.6 L297.1 555.8 L296.4 556.3 L296.0 556.5 L295.2 556.9 L294.7 557.1 L293.9 557.5 L293.4 557.7 L292.5 558.0 L292.1 558.2 L291.2 558.5 L290.7 558.6 L289.8 558.9 L289.3 559.0 L288.3 559.3 L287.8 559.4 L286.8 559.5 L286.3 559.6 L285.3 559.8 L284.8 559.8 L283.8 559.9 L283.3 560.0 L282.3 560.0 L281.8 560.0 L280.8 560.0 L280.2 560.0 L279.2 560.0 L278.7 560.0 L277.7 559.9 L277.2 559.8 L276.2 559.7 L275.7 559.6 L274.8 559.4 L274.3 559.3 L273.3 559.1 L272.8 559.0 L271.9 558.8 L271.5 558.6 L270.6 558.3 L270.1 558.2 L269.3 557.8 L268.8 557.6 L268.0 557.3 L267.6 557.1 L266.8 556.7 L266.4 556.4 L265.7 556.0 L265.3 555.8 L264.6 555.3 L264.3 555.0 L263.6 554.5 L263.3 554.2 L262.7 553.7 L262.4 553.4 L261.9 552.9 L261.6 552.6 L261.1 552.0 L260.9 551.7 L260.5 551.1 L260.3 550.8 L259.9 550.1 L259.8 550.0 L220.1 473.6 L220.0 473.4ZM222.2 472.2 L222.1 472.0 L221.9 471.4 L221.8 471.2 L221.6 470.6 L221.6 470.3 L221.5 469.7 L221.5 469.5 L221.4 468.8 L221.4 468.6 L221.5 468.0 L221.5 467.7 L221.6 467.1 L221.6 466.9 L221.8 466.2 L221.9 466.0 L222.1 465.4 L222.2 465.2 L222.5 464.5 L222.6 464.3 L222.9 463.7 L223.1 463.5 L223.5 462.9 L223.6 462.7 L224.1 462.1 L224.2 461.9 L224.8 461.4 L225.0 461.2 L225.5 460.6 L225.7 460.5 L226.3 460.0 L226.6 459.8 L227.2 459.3 L227.5 459.1 L228.2 458.7 L228.5 458.5 L229.2 458.1 L229.5 457.9 L230.3 457.6 L230.6 457.4 L231.4 457.1 L231.7 456.9 L232.5 456.6 L232.8 456.5 L233.7 456.2 L234.0 456.1 L235.0 455.9 L235.3 455.8 L236.2 455.6 L236.5 455.5 L237.5 455.4 L237.8 455.3 L238.8 455.2 L239.1 455.1 L240.1 455.0 L240.4 455.0 L241.4 455.0 L241.7 455.0 L242.7 455.0 L243.1 455.0 L244.0 455.0 L244.4 455.0 L245.3 455.1 L245.7 455.1 L246.6 455.2 L246.9 455.3 L247.9 455.5 L248.2 455.5 L249.1 455.7 L249.4 455.8 L250.3 456.0 L250.6 456.1 L251.5 456.4 L251.8 456.5 L252.6 456.8 L252.9 456.9 L253.7 457.3 L254.0 457.4 L254.7 457.8 L255.0 457.9 L255.7 458.4 L255.9 458.5 L256.6 459.0 L256.8 459.1 L257.5 459.6 L257.7 459.8 L258.2 460.3 L258.4 460.5 L258.9 461.0 L259.1 461.2 L259.6 461.7 L259.7 461.9 L260.1 462.5 L260.3 462.7 L260.6 463.3 L260.7 463.4 L278.7 497.1 L437.4 456.8 L437.4 456.8 L437.3 456.5 L437.3 455.9 L437.3 455.7 L437.4 455.0 L437.4 454.8 L437.6 454.2 L437.6 454.0 L437.8 453.3 L437.9 453.1 L438.1 452.5 L438.2 452.3 L438.5 451.7 L438.6 451.5 L439.0 450.9 L439.1 450.7 L439.5 450.1 L439.7 449.9 L440.2 449.3 L440.4 449.2 L440.9 448.6 L441.1 448.4 L441.7 447.9 L441.9 447.8 L442.5 447.3 L442.8 447.1 L443.4 446.7 L443.7 446.5 L444.4 446.1 L444.7 445.9 L445.4 445.6 L445.7 445.4 L446.5 445.1 L446.8 444.9 L447.6 444.6 L447.9 444.5 L448.8 444.2 L449.1 444.1 L450.0 443.9 L450.1 443.9 L561.5 415.7 L561.6 415.7 L562.5 415.5 L562.8 415.4 L563.8 415.2 L564.1 415.2 L565.0 415.1 L565.4 415.0 L566.3 414.9 L566.6 414.9 L567.6 414.9 L567.9 414.9 L568.9 414.9 L569.2 414.9 L570.2 414.9 L570.5 414.9 L571.5 415.0 L571.8 415.0 L572.8 415.1 L573.1 415.2 L574.0 415.4 L574.4 415.4 L575.3 415.6 L575.6 415.7 L576.5 415.9 L576.8 416.0 L577.7 416.3 L578.0 416.4 L578.9 416.7 L579.2 416.8 L580.0 417.1 L580.3 417.3 L581.0 417.6 L581.3 417.8 L582.1 418.2 L582.3 418.3 L583.0 418.8 L583.3 418.9 L583.9 419.4 L584.1 419.6 L584.8 420.1 L585.0 420.2 L585.5 420.7 L585.7 420.9 L586.2 421.5 L586.4 421.7 L586.9 422.2 L587.0 422.4 L587.4 423.0 L587.5 423.2 L587.9 423.8 L588.0 424.0 L588.3 424.6 L588.4 424.8 L588.6 425.4 L588.7 425.6 L588.8 426.3 L588.9 426.5 L589.0 427.1 L589.0 427.3 L589.0 428.0 L589.0 428.2 L589.0 428.8 L589.0 429.0 L588.9 429.6 L588.9 429.9 L588.7 430.5 L588.6 430.7 L588.4 431.3 L588.3 431.5 L588.1 432.1 L588.0 432.3 L587.6 432.9 L587.5 433.1 L587.1 433.7 L587.0 433.9 L586.5 434.4 L586.3 434.6 L585.8 435.1 L585.6 435.3 L585.1 435.8 L584.9 436.0 L584.3 436.5 L584.0 436.6 L583.4 437.1 L583.1 437.2 L582.4 437.7 L582.2 437.8 L581.4 438.2 L581.2 438.3 L580.4 438.7 L580.1 438.8 L579.3 439.1 L579.0 439.2 L578.1 439.5 L577.8 439.6 L576.9 439.8 L576.8 439.9 L464.8 468.4 L464.6 468.5 L463.7 468.7 L463.4 468.8 L462.4 468.9 L462.1 469.0 L461.1 469.1 L460.8 469.1 L459.8 469.2 L459.5 469.3 L458.5 469.3 L458.2 469.3 L457.2 469.3 L456.8 469.3 L455.9 469.3 L455.5 469.3 L454.6 469.2 L454.2 469.1 L453.3 469.0 L452.9 469.0 L452.0 468.8 L451.6 468.8 L450.7 468.6 L450.4 468.5 L449.5 468.2 L449.2 468.1 L448.3 467.9 L448.0 467.8 L447.1 467.4 L446.8 467.3 L446.0 467.0 L445.7 466.8 L445.0 466.5 L444.7 466.3 L444.0 465.9 L443.7 465.7 L443.0 465.3 L442.8 465.1 L442.1 464.7 L441.9 464.5 L441.8 464.4 L282.8 504.8 L301.2 539.3 L301.3 539.4 L301.6 540.1 L301.7 540.3 L301.9 541.0 L302.0 541.2 L302.2 541.8 L302.2 542.1 L302.3 542.7 L302.4 543.0 L302.4 543.6 L302.4 543.9 L302.4 544.6 L302.4 544.8 L302.3 545.5 L302.3 545.7 L302.1 546.4 L302.1 546.6 L301.8 547.3 L301.8 547.5 L301.5 548.1 L301.4 548.4 L301.0 549.0 L300.9 549.2 L300.5 549.9 L300.3 550.1 L299.9 550.7 L299.7 550.9 L299.2 551.5 L299.0 551.7 L298.4 552.2 L298.2 552.4 L297.6 553.0 L297.4 553.2 L296.7 553.7 L296.4 553.9 L295.7 554.3 L295.5 554.5 L294.7 554.9 L294.4 555.1 L293.6 555.5 L293.3 555.7 L292.5 556.0 L292.2 556.2 L291.3 556.5 L291.0 556.6 L290.1 556.9 L289.8 557.0 L288.8 557.3 L288.5 557.4 L287.5 557.6 L287.2 557.7 L286.2 557.9 L285.9 557.9 L284.9 558.1 L284.5 558.1 L283.5 558.2 L283.2 558.2 L282.2 558.3 L281.8 558.3 L280.8 558.3 L280.5 558.3 L279.5 558.2 L279.1 558.2 L278.1 558.1 L277.8 558.1 L276.8 558.0 L276.5 557.9 L275.5 557.7 L275.2 557.7 L274.2 557.5 L273.9 557.4 L273.0 557.1 L272.7 557.0 L271.8 556.7 L271.5 556.6 L270.6 556.3 L270.3 556.2 L269.5 555.8 L269.2 555.7 L268.4 555.3 L268.2 555.1 L267.4 554.7 L267.2 554.5 L266.5 554.0 L266.3 553.9 L265.6 553.4 L265.4 553.2 L264.8 552.6 L264.6 552.4 L264.1 551.9 L263.9 551.7 L263.4 551.1 L263.3 550.9 L262.8 550.3 L262.7 550.1 L262.4 549.5 L262.3 549.3 L222.5 473.0 L222.4 472.9ZM224.6 471.7 L224.5 471.6 L224.3 471.0 L224.3 470.9 L224.1 470.2 L224.1 470.1 L224.0 469.5 L224.0 469.4 L224.0 468.7 L224.0 468.6 L224.0 468.0 L224.0 467.8 L224.1 467.2 L224.1 467.1 L224.3 466.4 L224.3 466.3 L224.6 465.7 L224.6 465.6 L224.9 465.0 L224.9 464.8 L225.3 464.2 L225.4 464.1 L225.8 463.5 L225.8 463.4 L226.3 462.8 L226.4 462.7 L226.9 462.2 L227.0 462.1 L227.6 461.6 L227.7 461.5 L228.3 460.9 L228.4 460.9 L229.1 460.4 L229.2 460.3 L229.9 459.8 L230.0 459.7 L230.8 459.3 L230.9 459.2 L231.7 458.9 L231.9 458.8 L232.7 458.4 L232.9 458.4 L233.7 458.0 L233.9 458.0 L234.8 457.7 L234.9 457.6 L235.8 457.4 L236.0 457.4 L236.9 457.1 L237.1 457.1 L238.1 456.9 L238.2 456.9 L239.2 456.8 L239.4 456.8 L240.3 456.7 L240.5 456.7 L241.5 456.6 L241.7 456.6 L242.6 456.6 L242.8 456.6 L243.8 456.6 L244.0 456.7 L244.9 456.7 L245.1 456.7 L246.0 456.9 L246.2 456.9 L247.2 457.1 L247.3 457.1 L248.2 457.3 L248.4 457.3 L249.3 457.6 L249.4 457.6 L250.3 457.9 L250.5 457.9 L251.3 458.3 L251.4 458.3 L252.2 458.7 L252.4 458.7 L253.1 459.1 L253.3 459.2 L254.0 459.6 L254.1 459.7 L254.8 460.1 L254.9 460.2 L255.5 460.7 L255.6 460.8 L256.2 461.3 L256.3 461.4 L256.8 461.9 L256.9 462.0 L257.4 462.6 L257.4 462.7 L257.9 463.2 L257.9 463.3 L258.3 463.9 L258.3 464.0 L277.1 499.2 L440.1 457.9 L440.0 457.4 L439.9 457.3 L439.9 456.6 L439.9 456.5 L439.9 455.9 L439.9 455.8 L439.9 455.1 L439.9 455.0 L440.0 454.4 L440.1 454.3 L440.3 453.6 L440.3 453.5 L440.5 452.9 L440.6 452.8 L440.9 452.2 L441.0 452.1 L441.3 451.5 L441.4 451.4 L441.8 450.8 L441.9 450.7 L442.4 450.2 L442.5 450.1 L443.0 449.5 L443.1 449.4 L443.7 448.9 L443.8 448.8 L444.4 448.4 L444.5 448.3 L445.2 447.8 L445.4 447.7 L446.1 447.3 L446.2 447.2 L447.0 446.8 L447.1 446.8 L447.9 446.4 L448.1 446.4 L448.9 446.0 L449.1 446.0 L449.9 445.7 L450.1 445.7 L451.0 445.4 L451.1 445.4 L562.4 417.2 L562.5 417.2 L563.4 417.0 L563.6 417.0 L564.5 416.8 L564.7 416.8 L565.6 416.6 L565.8 416.6 L566.7 416.5 L566.9 416.5 L567.8 416.5 L568.0 416.5 L569.0 416.5 L569.2 416.5 L570.1 416.5 L570.3 416.5 L571.3 416.6 L571.4 416.6 L572.4 416.7 L572.6 416.8 L573.5 416.9 L573.7 416.9 L574.6 417.1 L574.7 417.2 L575.6 417.4 L575.8 417.5 L576.7 417.7 L576.8 417.8 L577.7 418.1 L577.8 418.1 L578.7 418.5 L578.8 418.6 L579.6 418.9 L579.7 419.0 L580.5 419.4 L580.6 419.5 L581.3 419.9 L581.4 420.0 L582.1 420.5 L582.2 420.6 L582.8 421.0 L582.9 421.1 L583.5 421.7 L583.6 421.8 L584.1 422.3 L584.2 422.4 L584.7 422.9 L584.7 423.1 L585.2 423.6 L585.2 423.7 L585.6 424.3 L585.6 424.4 L585.9 425.0 L586.0 425.1 L586.2 425.8 L586.2 425.9 L586.4 426.5 L586.4 426.6 L586.5 427.2 L586.5 427.3 L586.5 428.0 L586.5 428.1 L586.5 428.7 L586.5 428.8 L586.4 429.5 L586.4 429.6 L586.2 430.2 L586.2 430.3 L586.0 430.9 L586.0 431.0 L585.7 431.6 L585.6 431.7 L585.3 432.3 L585.2 432.4 L584.8 433.0 L584.7 433.1 L584.3 433.6 L584.2 433.7 L583.7 434.2 L583.6 434.3 L583.0 434.8 L582.9 434.9 L582.3 435.4 L582.2 435.5 L581.5 435.9 L581.4 436.0 L580.7 436.4 L580.6 436.5 L579.8 436.9 L579.7 437.0 L578.9 437.3 L578.8 437.4 L578.0 437.7 L577.8 437.8 L576.9 438.0 L576.8 438.1 L575.9 438.3 L575.8 438.4 L463.8 466.9 L463.8 466.9 L462.8 467.1 L462.7 467.2 L461.7 467.3 L461.6 467.4 L460.6 467.5 L460.4 467.5 L459.5 467.6 L459.3 467.6 L458.3 467.7 L458.1 467.7 L457.2 467.7 L457.0 467.7 L456.0 467.6 L455.8 467.6 L454.9 467.5 L454.7 467.5 L453.7 467.4 L453.6 467.4 L452.6 467.2 L452.4 467.2 L451.5 467.0 L451.3 466.9 L450.4 466.7 L450.3 466.6 L449.4 466.4 L449.2 466.3 L448.4 466.0 L448.2 465.9 L447.4 465.6 L447.3 465.5 L446.5 465.1 L446.3 465.1 L445.6 464.6 L445.5 464.6 L444.8 464.1 L444.7 464.0 L444.0 463.5 L443.9 463.5 L443.3 463.0 L443.2 462.9 L442.7 462.4 L279.6 503.8 L298.8 540.0 L298.8 540.0 L299.1 540.7 L299.2 540.8 L299.4 541.4 L299.5 541.5 L299.6 542.2 L299.7 542.3 L299.8 543.0 L299.8 543.1 L299.8 543.8 L299.8 543.9 L299.8 544.6 L299.8 544.7 L299.7 545.4 L299.7 545.5 L299.6 546.2 L299.5 546.3 L299.3 546.9 L299.3 547.1 L299.0 547.7 L298.9 547.8 L298.6 548.5 L298.5 548.6 L298.1 549.2 L298.0 549.3 L297.6 549.9 L297.5 550.0 L297.0 550.6 L296.9 550.7 L296.3 551.3 L296.2 551.4 L295.6 551.9 L295.5 552.0 L294.8 552.5 L294.7 552.6 L293.9 553.1 L293.8 553.2 L293.0 553.6 L292.9 553.7 L292.1 554.1 L291.9 554.2 L291.1 554.6 L290.9 554.7 L290.0 555.0 L289.9 555.1 L289.0 555.4 L288.8 555.4 L287.9 555.7 L287.7 555.7 L286.7 556.0 L286.6 556.0 L285.6 556.2 L285.4 556.2 L284.4 556.3 L284.2 556.4 L283.3 556.5 L283.1 556.5 L282.1 556.5 L281.9 556.5 L280.9 556.5 L280.7 556.5 L279.7 556.5 L279.5 556.5 L278.5 556.4 L278.3 556.4 L277.4 556.2 L277.2 556.2 L276.2 556.0 L276.1 556.0 L275.1 555.8 L274.9 555.8 L274.0 555.5 L273.9 555.5 L273.0 555.2 L272.8 555.1 L272.0 554.8 L271.8 554.7 L271.0 554.3 L270.8 554.3 L270.1 553.9 L269.9 553.8 L269.2 553.3 L269.1 553.3 L268.4 552.8 L268.2 552.7 L267.6 552.2 L267.5 552.1 L266.9 551.6 L266.8 551.5 L266.3 550.9 L266.2 550.8 L265.7 550.2 L265.6 550.1 L265.2 549.5 L265.1 549.4 L264.8 548.8 L264.7 548.7 L224.9 472.4 L224.9 472.3Z" fill="none" stroke="#005a49" stroke-width="0.95" stroke-opacity="0.9"/>
<defs><pattern id="hatch" width="2.3" height="2.3" patternUnits="userSpaceOnUse" patternTransform="rotate(22)"><rect width="1.15" height="2.3" fill="#000000" fill-opacity="0.08"/><rect x="1.15" width="1.15" height="2.3" fill="#ffffff" fill-opacity="0.05"/></pattern></defs>
<path d="M569.5 404.4 L568.5 404.4 L567.6 404.4 L566.6 404.5 L565.7 404.6 L564.7 404.8 L563.8 405.0 L452.1 433.2 L451.2 433.4 L450.3 433.7 L449.5 434.0 L448.7 434.4 L447.9 434.8 L447.2 435.2 L446.5 435.6 L445.9 436.1 L445.3 436.6 L444.7 437.2 L444.3 437.7 L443.8 438.3 L443.5 438.9 L443.2 439.5 L442.9 440.1 L442.7 440.7 L442.6 441.4 L442.6 442.0 L442.6 456.4 L442.6 457.1 L442.6 457.7 L442.8 458.3 L443.0 459.0 L443.2 459.6 L443.6 460.2 L443.9 460.8 L444.4 461.4 L444.9 461.9 L445.4 462.4 L446.0 462.9 L446.7 463.4 L447.4 463.9 L448.1 464.3 L448.9 464.7 L449.7 465.0 L450.6 465.3 L451.4 465.6 L452.3 465.9 L453.3 466.1 L454.2 466.2 L455.2 466.3 L456.2 466.4 L457.1 466.5 L458.1 466.4 L459.1 466.4 L460.0 466.3 L461.0 466.2 L461.9 466.0 L462.9 465.8 L574.8 437.3 L575.7 437.1 L576.5 436.8 L577.3 436.5 L578.1 436.1 L578.9 435.7 L579.6 435.3 L580.2 434.8 L580.8 434.4 L581.4 433.9 L581.9 433.3 L582.3 432.8 L582.7 432.2 L583.1 431.6 L583.4 431.0 L583.6 430.4 L583.7 429.8 L583.8 429.2 L583.8 428.6 L584.3 414.2 L584.3 413.5 L584.2 412.9 L584.0 412.3 L583.8 411.7 L583.5 411.1 L583.2 410.5 L582.8 409.9 L582.3 409.3 L581.8 408.8 L581.2 408.3 L580.6 407.8 L579.9 407.3 L579.2 406.9 L578.5 406.5 L577.7 406.1 L576.9 405.8 L576.0 405.5 L575.1 405.2 L574.2 405.0 L573.3 404.8 L572.4 404.6 L571.4 404.5 L570.4 404.4Z" fill="#d87329"/>
<path d="M569.5 404.4 L568.5 404.4 L567.6 404.4 L566.6 404.5 L565.7 404.6 L564.7 404.8 L563.8 405.0 L452.1 433.2 L451.2 433.4 L450.3 433.7 L449.5 434.0 L448.7 434.4 L447.9 434.8 L447.2 435.2 L446.5 435.6 L445.9 436.1 L445.3 436.6 L444.7 437.2 L444.3 437.7 L443.8 438.3 L443.5 438.9 L443.2 439.5 L442.9 440.1 L442.7 440.7 L442.6 441.4 L442.6 442.0 L442.6 456.4 L442.6 457.1 L442.6 457.7 L442.8 458.3 L443.0 459.0 L443.2 459.6 L443.6 460.2 L443.9 460.8 L444.4 461.4 L444.9 461.9 L445.4 462.4 L446.0 462.9 L446.7 463.4 L447.4 463.9 L448.1 464.3 L448.9 464.7 L449.7 465.0 L450.6 465.3 L451.4 465.6 L452.3 465.9 L453.3 466.1 L454.2 466.2 L455.2 466.3 L456.2 466.4 L457.1 466.5 L458.1 466.4 L459.1 466.4 L460.0 466.3 L461.0 466.2 L461.9 466.0 L462.9 465.8 L574.8 437.3 L575.7 437.1 L576.5 436.8 L577.3 436.5 L578.1 436.1 L578.9 435.7 L579.6 435.3 L580.2 434.8 L580.8 434.4 L581.4 433.9 L581.9 433.3 L582.3 432.8 L582.7 432.2 L583.1 431.6 L583.4 431.0 L583.6 430.4 L583.7 429.8 L583.8 429.2 L583.8 428.6 L584.3 414.2 L584.3 413.5 L584.2 412.9 L584.0 412.3 L583.8 411.7 L583.5 411.1 L583.2 410.5 L582.8 409.9 L582.3 409.3 L581.8 408.8 L581.2 408.3 L580.6 407.8 L579.9 407.3 L579.2 406.9 L578.5 406.5 L577.7 406.1 L576.9 405.8 L576.0 405.5 L575.1 405.2 L574.2 405.0 L573.3 404.8 L572.4 404.6 L571.4 404.5 L570.4 404.4Z" fill="url(#hatch)"/>
<path d="M445.0 444.7 L273.0 488.2 L273.6 502.6 L274.2 503.8 L445.7 460.3 L445.7 445.9Z" fill="#d87329"/>
<path d="M445.0 444.7 L273.0 488.2 L273.6 502.6 L274.2 503.8 L445.7 460.3 L445.7 445.9Z" fill="url(#hatch)"/>
<path d="M241.9 444.5 L241.0 444.5 L240.0 444.6 L239.0 444.7 L238.0 444.8 L237.1 445.0 L236.2 445.2 L235.2 445.4 L234.3 445.7 L233.5 446.0 L232.7 446.4 L231.9 446.8 L231.1 447.2 L230.4 447.7 L229.7 448.1 L229.1 448.7 L228.5 449.2 L228.0 449.8 L227.6 450.3 L227.1 450.9 L226.8 451.5 L226.5 452.2 L226.3 452.8 L226.1 453.4 L226.0 454.1 L226.0 454.7 L226.0 455.3 L226.7 469.8 L226.8 470.4 L227.0 471.1 L227.2 471.7 L227.5 472.3 L267.4 548.6 L267.7 549.2 L268.2 549.8 L268.6 550.4 L269.2 551.0 L269.8 551.5 L270.4 552.0 L271.1 552.5 L271.8 552.9 L272.6 553.3 L273.4 553.7 L274.3 554.0 L275.2 554.3 L276.1 554.6 L277.0 554.8 L278.0 555.0 L279.0 555.1 L280.0 555.2 L281.0 555.2 L282.0 555.2 L283.0 555.2 L284.0 555.1 L285.0 554.9 L285.9 554.8 L286.9 554.5 L287.8 554.3 L288.7 554.0 L289.6 553.6 L290.4 553.2 L291.3 552.8 L292.0 552.4 L292.7 551.9 L293.4 551.4 L294.0 550.8 L294.6 550.3 L295.1 549.7 L295.6 549.1 L296.0 548.5 L296.3 547.8 L296.6 547.2 L296.8 546.5 L297.0 545.8 L297.1 545.2 L297.1 544.5 L296.6 530.0 L296.5 529.3 L296.4 528.6 L296.3 528.0 L296.0 527.3 L295.7 526.7 L255.1 450.8 L254.8 450.2 L254.4 449.6 L253.9 449.0 L253.4 448.5 L252.8 448.0 L252.2 447.5 L251.5 447.1 L250.8 446.7 L250.1 446.3 L249.3 445.9 L248.4 445.6 L247.6 445.3 L246.7 445.1 L245.8 444.9 L244.8 444.7 L243.9 444.6 L242.9 444.6Z" fill="#d87329"/>
<path d="M241.9 444.5 L241.0 444.5 L240.0 444.6 L239.0 444.7 L238.0 444.8 L237.1 445.0 L236.2 445.2 L235.2 445.4 L234.3 445.7 L233.5 446.0 L232.7 446.4 L231.9 446.8 L231.1 447.2 L230.4 447.7 L229.7 448.1 L229.1 448.7 L228.5 449.2 L228.0 449.8 L227.6 450.3 L227.1 450.9 L226.8 451.5 L226.5 452.2 L226.3 452.8 L226.1 453.4 L226.0 454.1 L226.0 454.7 L226.0 455.3 L226.7 469.8 L226.8 470.4 L227.0 471.1 L227.2 471.7 L227.5 472.3 L267.4 548.6 L267.7 549.2 L268.2 549.8 L268.6 550.4 L269.2 551.0 L269.8 551.5 L270.4 552.0 L271.1 552.5 L271.8 552.9 L272.6 553.3 L273.4 553.7 L274.3 554.0 L275.2 554.3 L276.1 554.6 L277.0 554.8 L278.0 555.0 L279.0 555.1 L280.0 555.2 L281.0 555.2 L282.0 555.2 L283.0 555.2 L284.0 555.1 L285.0 554.9 L285.9 554.8 L286.9 554.5 L287.8 554.3 L288.7 554.0 L289.6 553.6 L290.4 553.2 L291.3 552.8 L292.0 552.4 L292.7 551.9 L293.4 551.4 L294.0 550.8 L294.6 550.3 L295.1 549.7 L295.6 549.1 L296.0 548.5 L296.3 547.8 L296.6 547.2 L296.8 546.5 L297.0 545.8 L297.1 545.2 L297.1 544.5 L296.6 530.0 L296.5 529.3 L296.4 528.6 L296.3 528.0 L296.0 527.3 L295.7 526.7 L255.1 450.8 L254.8 450.2 L254.4 449.6 L253.9 449.0 L253.4 448.5 L252.8 448.0 L252.2 447.5 L251.5 447.1 L250.8 446.7 L250.1 446.3 L249.3 445.9 L248.4 445.6 L247.6 445.3 L246.7 445.1 L245.8 444.9 L244.8 444.7 L243.9 444.6 L242.9 444.6Z" fill="url(#hatch)"/>
<path d="M226.5 457.2 L226.3 456.6 L226.1 456.0 L226.0 455.3 L226.0 454.7 L226.0 454.1 L226.1 453.4 L226.3 452.8 L226.5 452.2 L226.8 451.5 L227.1 450.9 L227.6 450.3 L228.0 449.8 L228.5 449.2 L229.1 448.7 L229.7 448.1 L230.4 447.7 L231.1 447.2 L231.9 446.8 L232.7 446.4 L233.5 446.0 L234.3 445.7 L235.2 445.4 L236.2 445.2 L237.1 445.0 L238.0 444.8 L239.0 444.7 L240.0 444.6 L241.0 444.5 L241.9 444.5 L242.9 444.6 L243.9 444.6 L244.8 444.7 L245.8 444.9 L246.7 445.1 L247.6 445.3 L248.4 445.6 L249.3 445.9 L250.1 446.3 L250.8 446.7 L251.5 447.1 L252.2 447.5 L252.8 448.0 L253.4 448.5 L253.9 449.0 L254.4 449.6 L254.8 450.2 L255.1 450.8 L295.7 526.7 L296.0 527.3 L296.3 528.0 L296.4 528.6 L296.5 529.3 L296.6 530.0 L296.6 530.6 L296.5 531.3 L296.3 532.0 L296.1 532.6 L295.8 533.3 L295.5 533.9 L295.1 534.5 L294.6 535.2 L294.1 535.7 L293.5 536.3 L292.9 536.8 L292.2 537.4 L291.5 537.8 L290.7 538.3 L289.9 538.7 L289.1 539.1 L288.2 539.4 L287.3 539.7 L286.4 540.0 L285.4 540.2 L284.4 540.4 L283.4 540.5 L282.4 540.6 L281.4 540.7 L280.4 540.7 L279.4 540.6 L278.4 540.6 L277.4 540.4 L276.5 540.3 L275.5 540.1 L274.6 539.8 L273.7 539.5 L272.9 539.2 L272.0 538.8 L271.3 538.4 L270.5 538.0 L269.8 537.5 L269.2 537.0 L268.6 536.5 L268.1 535.9 L267.6 535.3 L267.2 534.7 L266.8 534.1 L226.8 457.8ZM564.7 404.8 L565.7 404.6 L566.6 404.5 L567.6 404.4 L568.5 404.4 L569.5 404.4 L570.4 404.4 L571.4 404.5 L572.4 404.6 L573.3 404.8 L574.2 405.0 L575.1 405.2 L576.0 405.5 L576.9 405.8 L577.7 406.1 L578.5 406.5 L579.2 406.9 L579.9 407.3 L580.6 407.8 L581.2 408.3 L581.8 408.8 L582.3 409.3 L582.8 409.9 L583.2 410.5 L583.5 411.1 L583.8 411.7 L584.0 412.3 L584.2 412.9 L584.3 413.5 L584.3 414.2 L584.3 414.8 L584.2 415.4 L584.0 416.0 L583.8 416.6 L583.5 417.2 L583.2 417.8 L582.8 418.4 L582.4 418.9 L581.8 419.4 L581.3 419.9 L580.7 420.4 L580.0 420.9 L579.3 421.3 L578.6 421.7 L577.8 422.0 L576.9 422.3 L576.1 422.6 L575.2 422.9 L462.9 451.3 L462.0 451.6 L461.1 451.7 L460.1 451.9 L459.1 451.9 L458.2 452.0 L457.2 452.0 L456.2 452.0 L455.2 451.9 L454.3 451.8 L453.3 451.6 L452.4 451.4 L451.5 451.2 L450.6 450.9 L449.7 450.6 L448.9 450.2 L448.1 449.8 L447.4 449.4 L446.7 449.0 L446.0 448.5 L445.4 448.0 L444.9 447.5 L444.4 446.9 L444.0 446.3 L443.6 445.7 L443.2 445.1 L443.0 444.5 L442.8 443.9 L442.6 443.3 L442.6 442.6 L442.6 442.0 L442.6 441.4 L442.7 440.7 L442.9 440.1 L443.2 439.5 L443.5 438.9 L443.8 438.3 L444.3 437.7 L444.7 437.2 L445.3 436.6 L445.9 436.1 L446.5 435.6 L447.2 435.2 L447.9 434.8 L448.7 434.4 L449.5 434.0 L450.3 433.7 L451.2 433.4 L452.1 433.2 L563.8 405.0Z" fill="#ea7b31"/>
<path d="M226.5 457.2 L226.3 456.6 L226.1 456.0 L226.0 455.3 L226.0 454.7 L226.0 454.1 L226.1 453.4 L226.3 452.8 L226.5 452.2 L226.8 451.5 L227.1 450.9 L227.6 450.3 L228.0 449.8 L228.5 449.2 L229.1 448.7 L229.7 448.1 L230.4 447.7 L231.1 447.2 L231.9 446.8 L232.7 446.4 L233.5 446.0 L234.3 445.7 L235.2 445.4 L236.2 445.2 L237.1 445.0 L238.0 444.8 L239.0 444.7 L240.0 444.6 L241.0 444.5 L241.9 444.5 L242.9 444.6 L243.9 444.6 L244.8 444.7 L245.8 444.9 L246.7 445.1 L247.6 445.3 L248.4 445.6 L249.3 445.9 L250.1 446.3 L250.8 446.7 L251.5 447.1 L252.2 447.5 L252.8 448.0 L253.4 448.5 L253.9 449.0 L254.4 449.6 L254.8 450.2 L255.1 450.8 L295.7 526.7 L296.0 527.3 L296.3 528.0 L296.4 528.6 L296.5 529.3 L296.6 530.0 L296.6 530.6 L296.5 531.3 L296.3 532.0 L296.1 532.6 L295.8 533.3 L295.5 533.9 L295.1 534.5 L294.6 535.2 L294.1 535.7 L293.5 536.3 L292.9 536.8 L292.2 537.4 L291.5 537.8 L290.7 538.3 L289.9 538.7 L289.1 539.1 L288.2 539.4 L287.3 539.7 L286.4 540.0 L285.4 540.2 L284.4 540.4 L283.4 540.5 L282.4 540.6 L281.4 540.7 L280.4 540.7 L279.4 540.6 L278.4 540.6 L277.4 540.4 L276.5 540.3 L275.5 540.1 L274.6 539.8 L273.7 539.5 L272.9 539.2 L272.0 538.8 L271.3 538.4 L270.5 538.0 L269.8 537.5 L269.2 537.0 L268.6 536.5 L268.1 535.9 L267.6 535.3 L267.2 534.7 L266.8 534.1 L226.8 457.8ZM564.7 404.8 L565.7 404.6 L566.6 404.5 L567.6 404.4 L568.5 404.4 L569.5 404.4 L570.4 404.4 L571.4 404.5 L572.4 404.6 L573.3 404.8 L574.2 405.0 L575.1 405.2 L576.0 405.5 L576.9 405.8 L577.7 406.1 L578.5 406.5 L579.2 406.9 L579.9 407.3 L580.6 407.8 L581.2 408.3 L581.8 408.8 L582.3 409.3 L582.8 409.9 L583.2 410.5 L583.5 411.1 L583.8 411.7 L584.0 412.3 L584.2 412.9 L584.3 413.5 L584.3 414.2 L584.3 414.8 L584.2 415.4 L584.0 416.0 L583.8 416.6 L583.5 417.2 L583.2 417.8 L582.8 418.4 L582.4 418.9 L581.8 419.4 L581.3 419.9 L580.7 420.4 L580.0 420.9 L579.3 421.3 L578.6 421.7 L577.8 422.0 L576.9 422.3 L576.1 422.6 L575.2 422.9 L462.9 451.3 L462.0 451.6 L461.1 451.7 L460.1 451.9 L459.1 451.9 L458.2 452.0 L457.2 452.0 L456.2 452.0 L455.2 451.9 L454.3 451.8 L453.3 451.6 L452.4 451.4 L451.5 451.2 L450.6 450.9 L449.7 450.6 L448.9 450.2 L448.1 449.8 L447.4 449.4 L446.7 449.0 L446.0 448.5 L445.4 448.0 L444.9 447.5 L444.4 446.9 L444.0 446.3 L443.6 445.7 L443.2 445.1 L443.0 444.5 L442.8 443.9 L442.6 443.3 L442.6 442.6 L442.6 442.0 L442.6 441.4 L442.7 440.7 L442.9 440.1 L443.2 439.5 L443.5 438.9 L443.8 438.3 L444.3 437.7 L444.7 437.2 L445.3 436.6 L445.9 436.1 L446.5 435.6 L447.2 435.2 L447.9 434.8 L448.7 434.4 L449.5 434.0 L450.3 433.7 L451.2 433.4 L452.1 433.2 L563.8 405.0Z" fill="none" stroke="#f48d45" stroke-width="0.8"/>
<path d="M550.7 428.0 L550.7 428.0 L551.5 427.5 L551.5 427.5 L552.2 427.0 L552.3 427.0 L552.9 426.5 L553.0 426.4 L553.5 425.9 L553.6 425.8 L554.0 425.3 L554.1 425.2 L554.5 424.6 L554.5 424.6 L554.9 424.0 L554.9 423.9 L555.2 423.3 L555.2 423.2 L555.4 422.6 L555.4 422.6 L555.5 421.9 L555.6 421.8 L555.6 421.2 L555.6 421.1 L555.6 420.5 L555.5 420.4 L555.4 419.8 L555.4 419.7 L555.2 419.1 L555.2 419.0 L554.9 418.4 L554.9 418.3 L554.6 417.7 L554.5 417.7 L554.1 417.1 L554.1 417.0 L553.6 416.5 L553.5 416.4 L553.0 415.9 L552.9 415.8 L552.3 415.3 L552.2 415.2 L551.6 414.8 L551.5 414.7 L550.8 414.3 L550.7 414.2 L549.9 413.8 L549.8 413.8 L549.0 413.4 L548.9 413.4 L548.1 413.0 L548.0 413.0 L547.1 412.7 L547.0 412.7 L546.1 412.5 L546.0 412.5 L545.0 412.3 L544.9 412.2 L543.9 412.1 L543.9 412.1 L542.9 412.0 L542.8 412.0 L541.8 412.0 L541.7 412.0 L540.7 412.0 L540.6 412.0 L560.5 407.0 L560.4 407.0 L559.7 407.4 L559.7 407.5 L559.0 407.9 L558.9 408.0 L558.3 408.5 L558.2 408.5 L557.7 409.0 L557.6 409.1 L557.2 409.6 L557.1 409.7 L556.7 410.3 L556.7 410.3 L556.3 410.9 L556.3 411.0 L556.0 411.6 L556.0 411.6 L555.8 412.3 L555.8 412.3 L555.7 413.0 L555.7 413.0 L555.6 413.7 L555.6 413.7 L555.7 414.4 L555.7 414.4 L555.8 415.1 L555.8 415.1 L556.0 415.8 L556.0 415.8 L556.3 416.5 L556.3 416.5 L556.7 417.1 L556.7 417.2 L557.1 417.8 L557.1 417.8 L557.6 418.4 L557.7 418.5 L558.2 419.0 L558.3 419.1 L558.9 419.6 L559.0 419.6 L559.6 420.1 L559.7 420.2 L560.4 420.6 L560.5 420.6 L561.3 421.1 L561.4 421.1 L562.2 421.5 L562.3 421.5 L563.2 421.8 L563.2 421.9 L564.2 422.1 L564.2 422.2 L565.2 422.4 L565.3 422.4 L566.2 422.6 L566.3 422.6 L567.3 422.8 L567.4 422.8 L568.4 422.9 L568.5 422.9 L569.5 422.9 L569.6 422.9 L570.6 422.9 L570.6 422.9ZM522.7 435.1 L522.7 435.0 L523.5 434.6 L523.6 434.6 L524.2 434.1 L524.3 434.1 L524.9 433.5 L525.0 433.5 L525.5 433.0 L525.6 432.9 L526.1 432.4 L526.1 432.3 L526.6 431.7 L526.6 431.7 L527.0 431.1 L527.0 431.0 L527.3 430.4 L527.3 430.3 L527.5 429.7 L527.5 429.6 L527.6 429.0 L527.6 428.9 L527.7 428.3 L527.7 428.2 L527.6 427.5 L527.6 427.5 L527.5 426.8 L527.5 426.8 L527.3 426.1 L527.3 426.1 L527.0 425.5 L527.0 425.4 L526.7 424.8 L526.6 424.7 L526.2 424.1 L526.2 424.1 L525.7 423.5 L525.6 423.4 L525.1 422.9 L525.0 422.8 L524.4 422.3 L524.4 422.3 L523.7 421.8 L523.6 421.8 L522.9 421.3 L522.8 421.3 L522.1 420.8 L522.0 420.8 L521.1 420.4 L521.1 420.4 L520.2 420.1 L520.1 420.0 L519.2 419.8 L519.1 419.7 L518.2 419.5 L518.1 419.5 L517.1 419.3 L517.1 419.3 L516.1 419.1 L516.0 419.1 L515.0 419.0 L514.9 419.0 L513.9 419.0 L513.8 419.0 L512.8 419.0 L512.8 419.0 L532.7 414.0 L532.7 414.0 L531.9 414.4 L531.9 414.5 L531.2 414.9 L531.1 415.0 L530.5 415.5 L530.4 415.5 L529.9 416.0 L529.8 416.1 L529.3 416.6 L529.3 416.7 L528.9 417.3 L528.8 417.3 L528.5 417.9 L528.5 418.0 L528.2 418.6 L528.2 418.7 L528.0 419.3 L527.9 419.4 L527.8 420.0 L527.8 420.1 L527.8 420.7 L527.8 420.8 L527.8 421.4 L527.8 421.5 L527.9 422.1 L527.9 422.2 L528.1 422.8 L528.1 422.9 L528.4 423.5 L528.4 423.6 L528.8 424.2 L528.8 424.2 L529.2 424.8 L529.3 424.9 L529.7 425.5 L529.8 425.5 L530.3 426.1 L530.4 426.1 L531.0 426.6 L531.1 426.7 L531.7 427.2 L531.8 427.2 L532.5 427.7 L532.6 427.7 L533.4 428.1 L533.5 428.2 L534.3 428.5 L534.4 428.6 L535.3 428.9 L535.3 428.9 L536.2 429.2 L536.3 429.2 L537.3 429.5 L537.4 429.5 L538.3 429.7 L538.4 429.7 L539.4 429.9 L539.5 429.9 L540.5 430.0 L540.6 430.0 L541.6 430.0 L541.7 430.0 L542.7 430.0 L542.7 430.0ZM494.6 442.2 L494.6 442.2 L495.4 441.7 L495.5 441.7 L496.1 441.2 L496.2 441.2 L496.8 440.7 L496.9 440.6 L497.5 440.1 L497.5 440.0 L498.0 439.5 L498.1 439.4 L498.5 438.8 L498.5 438.8 L498.9 438.2 L498.9 438.1 L499.2 437.5 L499.2 437.4 L499.4 436.8 L499.4 436.7 L499.6 436.1 L499.6 436.0 L499.6 435.4 L499.6 435.3 L499.6 434.6 L499.6 434.6 L499.5 433.9 L499.5 433.9 L499.3 433.2 L499.3 433.2 L499.0 432.5 L499.0 432.5 L498.7 431.9 L498.6 431.8 L498.2 431.2 L498.2 431.1 L497.7 430.6 L497.6 430.5 L497.1 430.0 L497.0 429.9 L496.4 429.4 L496.4 429.4 L495.7 428.9 L495.6 428.8 L494.9 428.4 L494.8 428.3 L494.1 427.9 L494.0 427.9 L493.2 427.5 L493.1 427.5 L492.2 427.1 L492.1 427.1 L491.2 426.8 L491.2 426.8 L490.2 426.6 L490.1 426.5 L489.2 426.3 L489.1 426.3 L488.1 426.2 L488.0 426.2 L487.0 426.1 L486.9 426.1 L485.9 426.0 L485.8 426.0 L484.8 426.0 L484.8 426.0 L504.8 421.0 L504.8 421.0 L504.0 421.5 L504.0 421.5 L503.3 422.0 L503.2 422.0 L502.6 422.5 L502.5 422.5 L502.0 423.1 L501.9 423.1 L501.4 423.7 L501.4 423.7 L500.9 424.3 L500.9 424.4 L500.5 425.0 L500.5 425.0 L500.2 425.7 L500.2 425.7 L500.0 426.4 L500.0 426.4 L499.8 427.1 L499.8 427.1 L499.8 427.8 L499.8 427.8 L499.8 428.5 L499.8 428.5 L499.9 429.2 L499.9 429.3 L500.1 429.9 L500.1 430.0 L500.4 430.6 L500.4 430.6 L500.8 431.3 L500.8 431.3 L501.2 431.9 L501.3 432.0 L501.7 432.5 L501.8 432.6 L502.3 433.2 L502.4 433.2 L503.0 433.7 L503.1 433.8 L503.7 434.3 L503.8 434.3 L504.5 434.8 L504.6 434.8 L505.4 435.2 L505.4 435.3 L506.3 435.6 L506.4 435.7 L507.2 436.0 L507.3 436.0 L508.2 436.3 L508.3 436.3 L509.2 436.6 L509.3 436.6 L510.3 436.8 L510.4 436.8 L511.4 437.0 L511.5 437.0 L512.5 437.1 L512.5 437.1 L513.6 437.1 L513.6 437.1 L514.7 437.1 L514.7 437.1ZM466.4 449.3 L466.4 449.3 L467.2 448.9 L467.2 448.8 L467.9 448.4 L468.0 448.3 L468.6 447.8 L468.7 447.8 L469.3 447.2 L469.3 447.2 L469.8 446.6 L469.9 446.6 L470.3 446.0 L470.3 445.9 L470.7 445.3 L470.7 445.2 L471.0 444.6 L471.0 444.5 L471.3 443.9 L471.3 443.8 L471.4 443.2 L471.4 443.1 L471.5 442.5 L471.5 442.4 L471.5 441.8 L471.5 441.7 L471.4 441.0 L471.3 441.0 L471.2 440.3 L471.1 440.3 L470.9 439.6 L470.9 439.6 L470.5 439.0 L470.5 438.9 L470.1 438.3 L470.1 438.3 L469.6 437.7 L469.5 437.6 L469.0 437.1 L468.9 437.0 L468.3 436.5 L468.3 436.4 L467.6 436.0 L467.5 435.9 L466.8 435.5 L466.7 435.4 L466.0 435.0 L465.9 435.0 L465.1 434.6 L465.0 434.6 L464.1 434.2 L464.0 434.2 L463.1 433.9 L463.0 433.9 L462.1 433.6 L462.0 433.6 L461.1 433.4 L461.0 433.4 L460.0 433.3 L459.9 433.3 L458.9 433.2 L458.8 433.2 L457.8 433.1 L457.7 433.1 L456.7 433.1 L456.7 433.1 L476.8 428.1 L476.7 428.1 L476.0 428.5 L475.9 428.6 L475.2 429.0 L475.2 429.1 L474.5 429.6 L474.5 429.6 L473.9 430.2 L473.9 430.2 L473.3 430.8 L473.3 430.8 L472.9 431.4 L472.8 431.5 L472.5 432.1 L472.4 432.1 L472.2 432.7 L472.1 432.8 L471.9 433.4 L471.9 433.5 L471.8 434.1 L471.8 434.2 L471.7 434.9 L471.7 434.9 L471.7 435.6 L471.7 435.6 L471.8 436.3 L471.8 436.3 L472.0 437.0 L472.0 437.1 L472.3 437.7 L472.3 437.7 L472.7 438.4 L472.7 438.4 L473.1 439.0 L473.1 439.1 L473.6 439.7 L473.7 439.7 L474.2 440.3 L474.2 440.3 L474.9 440.8 L474.9 440.9 L475.6 441.4 L475.7 441.4 L476.4 441.9 L476.5 441.9 L477.2 442.3 L477.3 442.4 L478.1 442.8 L478.2 442.8 L479.1 443.1 L479.2 443.2 L480.1 443.4 L480.2 443.5 L481.1 443.7 L481.2 443.7 L482.2 443.9 L482.2 443.9 L483.2 444.1 L483.3 444.1 L484.3 444.2 L484.4 444.2 L485.4 444.2 L485.5 444.2 L486.5 444.2 L486.6 444.2ZM262.2 467.1 L262.1 467.1 L261.5 466.6 L261.4 466.6 L260.7 466.1 L260.7 466.1 L259.9 465.6 L259.8 465.6 L259.0 465.2 L258.9 465.2 L258.1 464.8 L258.0 464.8 L257.1 464.5 L257.0 464.5 L256.1 464.2 L256.0 464.2 L255.1 464.0 L255.0 464.0 L254.0 463.9 L253.9 463.9 L252.9 463.8 L252.8 463.8 L251.8 463.7 L251.7 463.7 L250.7 463.7 L250.6 463.7 L249.6 463.8 L249.5 463.8 L248.5 463.9 L248.4 463.9 L247.4 464.1 L247.3 464.1 L246.3 464.3 L246.3 464.3 L245.3 464.6 L245.2 464.6 L244.3 464.9 L244.2 465.0 L243.3 465.3 L243.3 465.4 L242.4 465.8 L242.4 465.8 L241.6 466.2 L241.5 466.3 L240.8 466.8 L240.7 466.8 L240.0 467.3 L240.0 467.4 L239.4 467.9 L239.3 468.0 L238.7 468.5 L238.7 468.6 L238.2 469.2 L238.2 469.3 L237.8 469.9 L237.7 469.9 L237.4 470.6 L237.4 470.6 L237.1 471.3 L237.1 471.3 L236.9 472.0 L236.9 472.1 L236.8 472.7 L236.8 472.8 L236.7 473.5 L236.7 473.5 L229.7 460.1 L229.7 460.1 L230.4 460.6 L230.4 460.7 L231.1 461.1 L231.2 461.2 L232.0 461.6 L232.0 461.6 L232.8 462.0 L232.9 462.1 L233.8 462.4 L233.8 462.4 L234.7 462.7 L234.8 462.7 L235.7 463.0 L235.8 463.0 L236.8 463.2 L236.9 463.2 L237.9 463.4 L237.9 463.4 L238.9 463.5 L239.0 463.5 L240.0 463.5 L240.1 463.5 L241.2 463.5 L241.2 463.5 L242.3 463.4 L242.3 463.4 L243.4 463.3 L243.4 463.3 L244.4 463.1 L244.5 463.1 L245.5 462.9 L245.6 462.9 L246.5 462.6 L246.6 462.6 L247.5 462.3 L247.6 462.3 L248.5 461.9 L248.6 461.9 L249.4 461.5 L249.5 461.4 L250.3 461.0 L250.3 460.9 L251.1 460.5 L251.1 460.4 L251.8 459.9 L251.9 459.9 L252.5 459.3 L252.5 459.3 L253.1 458.7 L253.1 458.6 L253.6 458.0 L253.6 458.0 L254.0 457.4 L254.1 457.3 L254.4 456.7 L254.4 456.6 L254.7 456.0 L254.7 455.9 L254.9 455.3 L254.9 455.2 L255.0 454.5 L255.0 454.5 L255.0 453.8 L255.0 453.8ZM272.2 486.0 L272.2 486.0 L271.5 485.4 L271.5 485.4 L270.8 484.9 L270.7 484.9 L269.9 484.5 L269.9 484.4 L269.1 484.0 L269.0 484.0 L268.1 483.7 L268.0 483.6 L267.1 483.3 L267.1 483.3 L266.1 483.1 L266.0 483.0 L265.1 482.8 L265.0 482.8 L264.0 482.7 L263.9 482.7 L262.9 482.6 L262.8 482.6 L261.8 482.5 L261.7 482.5 L260.7 482.5 L260.6 482.5 L259.6 482.6 L259.5 482.6 L258.5 482.7 L258.4 482.7 L257.4 482.9 L257.3 482.9 L256.3 483.1 L256.2 483.2 L255.3 483.4 L255.2 483.5 L254.3 483.8 L254.2 483.8 L253.3 484.2 L253.2 484.2 L252.4 484.6 L252.3 484.6 L251.5 485.1 L251.4 485.1 L250.7 485.6 L250.6 485.7 L250.0 486.2 L249.9 486.2 L249.3 486.8 L249.2 486.8 L248.7 487.4 L248.6 487.5 L248.1 488.1 L248.1 488.1 L247.7 488.8 L247.7 488.8 L247.3 489.5 L247.3 489.5 L247.0 490.2 L247.0 490.2 L246.8 490.9 L246.8 491.0 L246.7 491.7 L246.7 491.7 L246.7 492.4 L246.7 492.4 L239.6 478.9 L239.6 478.9 L240.2 479.4 L240.3 479.5 L241.0 479.9 L241.1 480.0 L241.8 480.4 L241.9 480.4 L242.7 480.8 L242.8 480.8 L243.6 481.2 L243.7 481.2 L244.6 481.5 L244.7 481.5 L245.6 481.8 L245.7 481.8 L246.7 482.0 L246.8 482.0 L247.8 482.2 L247.9 482.2 L248.9 482.3 L249.0 482.3 L250.0 482.3 L250.1 482.3 L251.1 482.3 L251.2 482.3 L252.2 482.3 L252.3 482.2 L253.3 482.1 L253.4 482.1 L254.4 481.9 L254.5 481.9 L255.5 481.7 L255.5 481.7 L256.5 481.4 L256.6 481.4 L257.5 481.1 L257.6 481.1 L258.5 480.7 L258.5 480.7 L259.4 480.3 L259.4 480.2 L260.2 479.8 L260.3 479.7 L261.0 479.2 L261.1 479.2 L261.8 478.7 L261.8 478.6 L262.5 478.1 L262.5 478.0 L263.1 477.4 L263.1 477.4 L263.6 476.8 L263.6 476.7 L264.0 476.1 L264.1 476.1 L264.4 475.4 L264.4 475.4 L264.7 474.7 L264.7 474.6 L264.9 474.0 L264.9 473.9 L265.0 473.2 L265.0 473.2 L265.0 472.5 L265.0 472.5ZM282.4 505.0 L282.4 505.0 L281.7 504.5 L281.6 504.5 L280.9 504.0 L280.9 503.9 L280.1 503.5 L280.0 503.5 L279.2 503.1 L279.1 503.0 L278.3 502.7 L278.2 502.7 L277.3 502.4 L277.2 502.3 L276.2 502.1 L276.2 502.1 L275.2 501.9 L275.1 501.8 L274.1 501.7 L274.0 501.7 L273.0 501.6 L272.9 501.6 L271.9 501.5 L271.8 501.5 L270.8 501.6 L270.7 501.6 L269.7 501.6 L269.6 501.6 L268.5 501.7 L268.5 501.8 L267.5 501.9 L267.4 501.9 L266.4 502.2 L266.3 502.2 L265.3 502.5 L265.3 502.5 L264.3 502.8 L264.2 502.8 L263.4 503.2 L263.3 503.2 L262.4 503.6 L262.4 503.7 L261.6 504.1 L261.5 504.2 L260.8 504.7 L260.7 504.7 L260.0 505.2 L260.0 505.3 L259.3 505.8 L259.3 505.9 L258.7 506.5 L258.7 506.5 L258.2 507.2 L258.1 507.2 L257.7 507.9 L257.7 507.9 L257.4 508.6 L257.3 508.6 L257.1 509.3 L257.1 509.4 L256.9 510.0 L256.9 510.1 L256.8 510.8 L256.8 510.8 L256.7 511.5 L256.7 511.6 L249.5 497.9 L249.6 497.9 L250.2 498.4 L250.3 498.4 L251.0 498.9 L251.1 499.0 L251.8 499.4 L251.9 499.4 L252.7 499.8 L252.8 499.9 L253.6 500.2 L253.7 500.2 L254.6 500.5 L254.7 500.6 L255.7 500.8 L255.7 500.8 L256.7 501.0 L256.8 501.0 L257.8 501.2 L257.9 501.2 L258.9 501.3 L259.0 501.3 L260.0 501.3 L260.1 501.3 L261.1 501.3 L261.2 501.3 L262.2 501.3 L262.3 501.3 L263.4 501.1 L263.4 501.1 L264.4 501.0 L264.5 500.9 L265.5 500.7 L265.6 500.7 L266.6 500.4 L266.6 500.4 L267.6 500.1 L267.7 500.1 L268.5 499.7 L268.6 499.7 L269.5 499.2 L269.5 499.2 L270.3 498.8 L270.4 498.7 L271.1 498.2 L271.2 498.2 L271.9 497.7 L271.9 497.6 L272.5 497.1 L272.6 497.0 L273.2 496.4 L273.2 496.4 L273.7 495.7 L273.7 495.7 L274.1 495.1 L274.2 495.0 L274.5 494.4 L274.5 494.3 L274.8 493.6 L274.8 493.6 L275.0 492.9 L275.0 492.8 L275.1 492.2 L275.1 492.1 L275.1 491.4 L275.1 491.4ZM292.7 524.3 L292.7 524.3 L292.0 523.8 L291.9 523.7 L291.2 523.2 L291.1 523.2 L290.4 522.8 L290.3 522.7 L289.5 522.3 L289.4 522.3 L288.5 521.9 L288.4 521.9 L287.5 521.6 L287.4 521.6 L286.5 521.3 L286.4 521.3 L285.4 521.1 L285.3 521.1 L284.3 520.9 L284.3 520.9 L283.2 520.8 L283.1 520.8 L282.1 520.8 L282.0 520.8 L281.0 520.8 L280.9 520.8 L279.9 520.9 L279.8 520.9 L278.7 521.0 L278.7 521.0 L277.6 521.2 L277.6 521.2 L276.6 521.4 L276.5 521.4 L275.5 521.7 L275.4 521.7 L274.5 522.1 L274.4 522.1 L273.5 522.5 L273.5 522.5 L272.6 522.9 L272.5 522.9 L271.7 523.4 L271.7 523.4 L270.9 523.9 L270.9 524.0 L270.2 524.5 L270.1 524.6 L269.5 525.1 L269.4 525.2 L268.9 525.8 L268.8 525.8 L268.3 526.5 L268.3 526.5 L267.9 527.2 L267.9 527.2 L267.5 527.9 L267.5 527.9 L267.2 528.6 L267.2 528.7 L267.0 529.4 L267.0 529.4 L266.9 530.1 L266.9 530.2 L266.9 530.9 L266.9 530.9 L259.6 517.1 L259.6 517.1 L260.3 517.6 L260.4 517.6 L261.1 518.1 L261.1 518.2 L261.9 518.6 L262.0 518.6 L262.8 519.0 L262.9 519.1 L263.8 519.4 L263.8 519.5 L264.7 519.8 L264.8 519.8 L265.8 520.0 L265.9 520.1 L266.8 520.3 L266.9 520.3 L267.9 520.4 L268.0 520.4 L269.0 520.5 L269.1 520.5 L270.2 520.6 L270.3 520.6 L271.3 520.6 L271.4 520.6 L272.4 520.5 L272.5 520.5 L273.5 520.4 L273.6 520.4 L274.6 520.2 L274.7 520.2 L275.7 520.0 L275.8 519.9 L276.7 519.7 L276.8 519.6 L277.8 519.3 L277.8 519.3 L278.7 518.9 L278.8 518.9 L279.7 518.5 L279.7 518.4 L280.5 518.0 L280.6 517.9 L281.3 517.4 L281.4 517.4 L282.1 516.9 L282.1 516.8 L282.8 516.2 L282.8 516.2 L283.4 515.6 L283.4 515.5 L283.9 514.9 L283.9 514.9 L284.3 514.2 L284.4 514.2 L284.7 513.5 L284.7 513.5 L285.0 512.8 L285.0 512.7 L285.2 512.0 L285.2 512.0 L285.3 511.3 L285.3 511.2 L285.3 510.5 L285.3 510.5Z" fill="#f2e437" fill-rule="evenodd"/>
<path d="M557.1 424.5 L557.2 424.4 L557.5 423.7 L557.5 423.6 L557.7 422.9 L557.8 422.8 L557.9 422.1 L557.9 421.9 L558.0 421.3 L558.0 421.1 L558.1 421.3 L558.8 421.7 L559.1 421.8 L559.8 422.2 L560.1 422.3 L560.9 422.7 L561.1 422.8 L562.0 423.2 L562.2 423.2ZM529.2 431.6 L529.3 431.4 L529.5 430.8 L529.6 430.7 L529.8 430.0 L529.8 429.8 L530.0 429.2 L530.0 429.0 L530.0 428.4 L530.0 428.2 L530.2 428.3 L530.9 428.8 L531.1 428.9 L531.9 429.3 L532.1 429.4 L533.0 429.8 L533.2 429.9 L534.1 430.2 L534.3 430.3ZM501.1 438.7 L501.2 438.6 L501.5 437.9 L501.5 437.8 L501.8 437.1 L501.8 436.9 L501.9 436.3 L502.0 436.1 L502.0 435.5 L502.0 435.3 L502.2 435.4 L502.9 435.9 L503.1 436.0 L503.9 436.4 L504.1 436.5 L504.9 436.9 L505.2 437.0 L506.1 437.3 L506.3 437.4ZM472.9 445.8 L473.0 445.7 L473.3 445.1 L473.4 444.9 L473.6 444.2 L473.6 444.1 L473.8 443.4 L473.8 443.2 L473.9 442.6 L473.9 442.4 L474.0 442.5 L474.7 443.0 L475.0 443.1 L475.7 443.5 L476.0 443.6 L476.8 444.0 L477.0 444.1 L477.9 444.5 L478.1 444.5ZM470.3 431.5 L470.2 431.7 L469.9 432.3 L469.8 432.5 L469.6 433.1 L469.6 433.3 L469.4 433.9 L469.4 434.1 L469.3 434.8 L469.3 434.9 L469.2 434.8 L468.4 434.3 L468.2 434.2 L467.5 433.8 L467.2 433.7 L466.4 433.3 L466.2 433.2 L465.3 432.9 L465.1 432.8ZM498.3 424.4 L498.2 424.6 L498.0 425.2 L497.9 425.4 L497.7 426.0 L497.6 426.2 L497.5 426.8 L497.5 427.0 L497.4 427.7 L497.4 427.8 L497.3 427.7 L496.5 427.3 L496.3 427.1 L495.6 426.7 L495.3 426.6 L494.5 426.2 L494.3 426.1 L493.4 425.8 L493.2 425.7ZM526.3 417.4 L526.2 417.5 L525.9 418.2 L525.8 418.3 L525.6 419.0 L525.6 419.1 L525.5 419.8 L525.5 420.0 L525.4 420.6 L525.4 420.8 L525.2 420.7 L524.5 420.2 L524.3 420.1 L523.5 419.7 L523.3 419.6 L522.5 419.2 L522.2 419.1 L521.4 418.8 L521.2 418.7ZM554.1 410.4 L554.0 410.5 L553.8 411.1 L553.7 411.3 L553.5 411.9 L553.4 412.1 L553.3 412.8 L553.3 412.9 L553.3 413.6 L553.3 413.7 L553.1 413.6 L552.4 413.2 L552.2 413.1 L551.4 412.6 L551.2 412.5 L550.3 412.2 L550.1 412.1 L549.2 411.7 L549.0 411.7ZM257.0 462.8 L256.8 462.7 L255.8 462.5 L255.6 462.5 L254.6 462.3 L254.3 462.3 L253.3 462.2 L253.0 462.2 L252.0 462.1 L251.8 462.1 L252.0 462.0 L252.7 461.6 L252.9 461.4 L253.6 460.9 L253.8 460.8 L254.4 460.2 L254.5 460.1 L255.1 459.5 L255.2 459.4ZM267.0 481.6 L266.8 481.5 L265.9 481.3 L265.6 481.3 L264.6 481.1 L264.3 481.1 L263.3 481.0 L263.0 481.0 L262.0 480.9 L261.8 480.9 L262.0 480.8 L262.7 480.3 L262.9 480.2 L263.6 479.7 L263.8 479.5 L264.4 479.0 L264.5 478.8 L265.1 478.3 L265.2 478.1ZM277.2 500.6 L276.9 500.5 L276.0 500.3 L275.7 500.3 L274.7 500.1 L274.4 500.1 L273.4 500.0 L273.1 500.0 L272.1 499.9 L271.9 499.9 L272.1 499.8 L272.8 499.3 L273.0 499.2 L273.7 498.7 L273.9 498.5 L274.5 498.0 L274.6 497.8 L275.2 497.2 L275.3 497.1ZM287.4 519.8 L287.2 519.8 L286.2 519.6 L285.9 519.5 L284.9 519.4 L284.7 519.3 L283.7 519.2 L283.4 519.2 L282.3 519.2 L282.1 519.2 L282.3 519.1 L283.0 518.6 L283.2 518.4 L283.9 517.9 L284.1 517.7 L284.7 517.2 L284.9 517.0 L285.4 516.4 L285.5 516.3ZM264.8 521.6 L265.1 521.6 L266.0 521.8 L266.3 521.9 L267.3 522.0 L267.6 522.0 L268.6 522.1 L268.9 522.2 L269.9 522.2 L270.2 522.2 L270.0 522.3 L269.2 522.8 L269.0 523.0 L268.4 523.5 L268.2 523.6 L267.6 524.2 L267.4 524.4 L266.8 525.0 L266.7 525.1ZM254.7 502.3 L254.9 502.4 L255.9 502.6 L256.2 502.6 L257.2 502.8 L257.5 502.8 L258.5 502.9 L258.7 502.9 L259.8 502.9 L260.0 503.0 L259.8 503.1 L259.1 503.5 L258.9 503.7 L258.2 504.2 L258.0 504.4 L257.4 504.9 L257.2 505.1 L256.7 505.7 L256.6 505.8ZM244.7 483.3 L244.9 483.3 L245.9 483.5 L246.2 483.6 L247.2 483.7 L247.4 483.8 L248.4 483.8 L248.7 483.9 L249.7 483.9 L250.0 483.9 L249.8 484.0 L249.0 484.5 L248.9 484.6 L248.2 485.2 L248.0 485.3 L247.4 485.9 L247.2 486.0 L246.7 486.6 L246.5 486.7ZM234.8 464.5 L235.0 464.5 L236.0 464.7 L236.3 464.8 L237.2 464.9 L237.5 464.9 L238.5 465.0 L238.8 465.0 L239.8 465.1 L240.0 465.1 L239.9 465.2 L239.1 465.7 L238.9 465.8 L238.2 466.3 L238.1 466.5 L237.5 467.0 L237.3 467.2 L236.7 467.7 L236.6 467.9Z" fill="#e23a3c" stroke="#a855a8" stroke-width="0.6" fill-rule="evenodd"/>
<path d="M293.7 527.2 L294.0 527.9 L294.3 528.5 L294.4 529.2 L294.5 529.9 L294.5 530.6 L294.4 531.3 L294.2 532.0 L293.9 532.7 L293.6 533.3 L293.2 534.0 L292.7 534.6 L292.1 535.2 L291.5 535.8 L290.8 536.3 L290.1 536.8 L289.3 537.3 L288.4 537.7 L287.6 538.1 L286.6 538.4 L285.7 538.7 L284.7 538.9 L283.6 539.1 L282.6 539.2 L281.6 539.2 L280.5 539.3 L279.5 539.2 L278.5 539.1 L277.5 539.0 L276.5 538.8 L275.5 538.5 L274.6 538.2 L273.7 537.8 L272.9 537.4 L272.1 537.0 L271.4 536.5 L270.8 536.0 L270.2 535.4 L269.6 534.8 L269.2 534.2 L268.8 533.6 L268.5 532.9 L268.3 532.2 L268.1 531.6 L268.1 530.9 L268.1 530.2 L268.2 529.5 L268.4 528.8 L268.6 528.1 L269.0 527.5 L269.4 526.8 L269.9 526.2 L270.4 525.6 L271.1 525.0 L271.7 524.5 L272.5 524.0 L273.3 523.5 L274.1 523.1 L275.0 522.8 L276.0 522.4 L276.9 522.2 L277.9 521.9 L278.9 521.8 L279.9 521.6 L281.0 521.6 L282.0 521.6 L283.0 521.6 L284.0 521.7 L285.1 521.9 L286.0 522.1 L287.0 522.3 L287.9 522.6 L288.8 523.0 L289.6 523.4 L290.4 523.8 L291.1 524.3 L291.8 524.8 L292.4 525.4 L292.9 526.0 L293.3 526.6ZM283.4 507.9 L283.7 508.5 L283.9 509.2 L284.1 509.9 L284.1 510.6 L284.1 511.2 L284.0 511.9 L283.9 512.6 L283.6 513.3 L283.3 513.9 L282.9 514.6 L282.4 515.2 L281.8 515.8 L281.2 516.4 L280.5 516.9 L279.8 517.4 L279.0 517.8 L278.1 518.2 L277.2 518.6 L276.3 518.9 L275.4 519.2 L274.4 519.4 L273.4 519.6 L272.3 519.7 L271.3 519.8 L270.3 519.8 L269.2 519.8 L268.2 519.7 L267.2 519.5 L266.3 519.3 L265.3 519.1 L264.4 518.7 L263.5 518.4 L262.7 518.0 L261.9 517.6 L261.2 517.1 L260.6 516.6 L260.0 516.0 L259.4 515.4 L259.0 514.8 L258.6 514.2 L258.3 513.5 L258.1 512.9 L258.0 512.2 L257.9 511.5 L257.9 510.8 L258.0 510.1 L258.2 509.5 L258.5 508.8 L258.8 508.1 L259.2 507.5 L259.7 506.9 L260.3 506.3 L260.9 505.7 L261.6 505.2 L262.3 504.7 L263.1 504.3 L263.9 503.9 L264.8 503.5 L265.8 503.2 L266.7 502.9 L267.7 502.7 L268.7 502.5 L269.7 502.4 L270.8 502.3 L271.8 502.3 L272.8 502.4 L273.8 502.5 L274.8 502.6 L275.8 502.8 L276.7 503.1 L277.6 503.4 L278.5 503.7 L279.3 504.1 L280.1 504.5 L280.8 505.0 L281.5 505.5 L282.1 506.1 L282.6 506.7 L283.0 507.3ZM273.2 488.8 L273.5 489.4 L273.7 490.1 L273.9 490.8 L273.9 491.4 L273.9 492.1 L273.8 492.8 L273.7 493.5 L273.4 494.1 L273.1 494.8 L272.7 495.4 L272.2 496.0 L271.6 496.6 L271.0 497.2 L270.3 497.7 L269.6 498.2 L268.8 498.6 L267.9 499.0 L267.1 499.4 L266.1 499.7 L265.2 500.0 L264.2 500.2 L263.2 500.4 L262.2 500.5 L261.1 500.6 L260.1 500.6 L259.1 500.5 L258.1 500.4 L257.1 500.3 L256.1 500.1 L255.2 499.8 L254.3 499.5 L253.4 499.2 L252.6 498.8 L251.8 498.4 L251.1 497.9 L250.5 497.4 L249.9 496.8 L249.4 496.3 L248.9 495.7 L248.6 495.0 L248.3 494.4 L248.0 493.7 L247.9 493.1 L247.8 492.4 L247.9 491.7 L248.0 491.0 L248.2 490.4 L248.4 489.7 L248.8 489.0 L249.2 488.4 L249.7 487.8 L250.2 487.2 L250.8 486.7 L251.5 486.1 L252.3 485.7 L253.0 485.2 L253.9 484.8 L254.8 484.4 L255.7 484.1 L256.6 483.9 L257.6 483.6 L258.6 483.5 L259.6 483.4 L260.7 483.3 L261.7 483.3 L262.7 483.3 L263.7 483.4 L264.7 483.6 L265.7 483.8 L266.6 484.0 L267.5 484.3 L268.4 484.7 L269.2 485.0 L269.9 485.5 L270.6 486.0 L271.3 486.5 L271.9 487.0 L272.4 487.6 L272.8 488.2ZM263.1 469.9 L263.4 470.5 L263.7 471.2 L263.8 471.9 L263.9 472.5 L263.8 473.2 L263.7 473.9 L263.6 474.5 L263.3 475.2 L263.0 475.8 L262.6 476.5 L262.1 477.1 L261.5 477.6 L260.9 478.2 L260.2 478.7 L259.5 479.2 L258.7 479.6 L257.9 480.0 L257.0 480.4 L256.1 480.7 L255.1 481.0 L254.1 481.2 L253.1 481.4 L252.1 481.5 L251.1 481.6 L250.1 481.6 L249.1 481.5 L248.1 481.4 L247.1 481.3 L246.1 481.1 L245.2 480.8 L244.3 480.5 L243.4 480.2 L242.6 479.8 L241.8 479.4 L241.1 478.9 L240.5 478.4 L239.9 477.9 L239.4 477.3 L239.0 476.7 L238.6 476.1 L238.3 475.4 L238.1 474.8 L238.0 474.1 L237.9 473.5 L237.9 472.8 L238.0 472.1 L238.2 471.5 L238.5 470.8 L238.8 470.2 L239.2 469.5 L239.7 468.9 L240.3 468.4 L240.9 467.8 L241.6 467.3 L242.3 466.8 L243.1 466.4 L243.9 466.0 L244.8 465.6 L245.7 465.3 L246.7 465.0 L247.6 464.8 L248.6 464.7 L249.6 464.5 L250.7 464.5 L251.7 464.5 L252.7 464.5 L253.7 464.6 L254.7 464.8 L255.6 464.9 L256.6 465.2 L257.5 465.5 L258.3 465.8 L259.1 466.2 L259.9 466.6 L260.6 467.1 L261.2 467.6 L261.8 468.1 L262.3 468.7 L262.8 469.3ZM253.2 451.2 L253.5 451.9 L253.7 452.5 L253.8 453.2 L253.9 453.8 L253.9 454.5 L253.8 455.2 L253.6 455.8 L253.3 456.5 L253.0 457.1 L252.6 457.7 L252.1 458.3 L251.6 458.9 L250.9 459.4 L250.3 459.9 L249.5 460.4 L248.7 460.9 L247.9 461.3 L247.0 461.6 L246.1 461.9 L245.2 462.2 L244.2 462.4 L243.2 462.6 L242.2 462.7 L241.2 462.8 L240.2 462.8 L239.2 462.7 L238.2 462.6 L237.2 462.5 L236.2 462.3 L235.3 462.0 L234.4 461.7 L233.5 461.4 L232.7 461.0 L232.0 460.6 L231.3 460.1 L230.6 459.6 L230.1 459.1 L229.6 458.5 L229.1 458.0 L228.8 457.3 L228.5 456.7 L228.3 456.1 L228.1 455.4 L228.1 454.8 L228.1 454.1 L228.2 453.4 L228.4 452.8 L228.7 452.1 L229.0 451.5 L229.4 450.9 L229.9 450.3 L230.4 449.7 L231.1 449.2 L231.7 448.7 L232.5 448.2 L233.3 447.8 L234.1 447.4 L235.0 447.0 L235.9 446.7 L236.8 446.4 L237.8 446.2 L238.8 446.1 L239.8 445.9 L240.8 445.9 L241.8 445.9 L242.8 445.9 L243.8 446.0 L244.8 446.1 L245.7 446.3 L246.7 446.6 L247.5 446.9 L248.4 447.2 L249.2 447.6 L250.0 448.0 L250.7 448.5 L251.3 449.0 L251.9 449.5 L252.4 450.1 L252.8 450.6ZM469.4 439.2 L469.8 439.8 L470.0 440.5 L470.2 441.1 L470.3 441.8 L470.3 442.4 L470.3 443.1 L470.1 443.7 L469.9 444.4 L469.6 445.0 L469.3 445.6 L468.8 446.2 L468.3 446.8 L467.7 447.3 L467.1 447.8 L466.4 448.3 L465.6 448.8 L464.8 449.2 L464.0 449.5 L463.1 449.8 L462.2 450.1 L461.2 450.3 L460.2 450.5 L459.2 450.6 L458.2 450.6 L457.2 450.6 L456.2 450.6 L455.2 450.5 L454.2 450.4 L453.3 450.2 L452.3 449.9 L451.4 449.6 L450.5 449.3 L449.7 448.9 L448.9 448.5 L448.2 448.0 L447.5 447.5 L446.9 447.0 L446.4 446.4 L445.9 445.9 L445.5 445.3 L445.2 444.6 L444.9 444.0 L444.7 443.3 L444.6 442.7 L444.6 442.0 L444.7 441.4 L444.8 440.7 L445.1 440.1 L445.4 439.5 L445.7 438.8 L446.2 438.2 L446.7 437.7 L447.3 437.1 L447.9 436.6 L448.6 436.2 L449.4 435.7 L450.2 435.3 L451.0 435.0 L451.9 434.7 L452.8 434.4 L453.8 434.2 L454.7 434.0 L455.7 433.9 L456.7 433.9 L457.7 433.9 L458.7 433.9 L459.7 434.0 L460.7 434.1 L461.7 434.3 L462.6 434.6 L463.5 434.9 L464.4 435.2 L465.2 435.6 L466.0 436.0 L466.7 436.4 L467.4 436.9 L468.0 437.5 L468.6 438.0 L469.0 438.6ZM497.6 432.1 L497.9 432.7 L498.2 433.4 L498.4 434.0 L498.5 434.7 L498.5 435.3 L498.4 436.0 L498.3 436.6 L498.1 437.3 L497.8 437.9 L497.5 438.5 L497.0 439.1 L496.5 439.6 L495.9 440.2 L495.3 440.7 L494.6 441.2 L493.9 441.6 L493.1 442.0 L492.2 442.4 L491.3 442.7 L490.4 442.9 L489.5 443.1 L488.5 443.3 L487.5 443.4 L486.5 443.5 L485.5 443.5 L484.5 443.4 L483.5 443.3 L482.5 443.2 L481.5 443.0 L480.6 442.8 L479.7 442.5 L478.8 442.1 L478.0 441.8 L477.2 441.3 L476.4 440.9 L475.8 440.4 L475.2 439.9 L474.6 439.3 L474.1 438.7 L473.7 438.1 L473.4 437.5 L473.1 436.9 L473.0 436.2 L472.9 435.6 L472.8 434.9 L472.9 434.3 L473.0 433.6 L473.2 433.0 L473.5 432.3 L473.9 431.7 L474.3 431.1 L474.8 430.6 L475.4 430.0 L476.1 429.5 L476.7 429.1 L477.5 428.6 L478.3 428.2 L479.1 427.9 L480.0 427.6 L480.9 427.3 L481.9 427.1 L482.9 427.0 L483.9 426.8 L484.9 426.8 L485.9 426.8 L486.9 426.8 L487.9 426.9 L488.8 427.1 L489.8 427.2 L490.7 427.5 L491.6 427.8 L492.5 428.1 L493.3 428.5 L494.1 428.9 L494.9 429.4 L495.5 429.8 L496.1 430.4 L496.7 430.9 L497.2 431.5ZM525.6 425.0 L525.9 425.6 L526.2 426.3 L526.4 426.9 L526.5 427.6 L526.5 428.2 L526.5 428.9 L526.4 429.5 L526.2 430.2 L525.9 430.8 L525.5 431.4 L525.1 432.0 L524.6 432.5 L524.0 433.1 L523.4 433.6 L522.7 434.0 L522.0 434.5 L521.2 434.9 L520.3 435.2 L519.5 435.5 L518.5 435.8 L517.6 436.0 L516.6 436.2 L515.6 436.3 L514.6 436.3 L513.6 436.4 L512.6 436.3 L511.6 436.2 L510.6 436.1 L509.7 435.9 L508.7 435.6 L507.8 435.4 L506.9 435.0 L506.1 434.6 L505.3 434.2 L504.6 433.8 L503.9 433.3 L503.3 432.8 L502.7 432.2 L502.3 431.6 L501.8 431.0 L501.5 430.4 L501.2 429.8 L501.1 429.1 L501.0 428.5 L500.9 427.8 L501.0 427.2 L501.1 426.5 L501.3 425.9 L501.6 425.3 L502.0 424.7 L502.4 424.1 L502.9 423.5 L503.5 423.0 L504.1 422.5 L504.8 422.0 L505.5 421.6 L506.3 421.2 L507.2 420.8 L508.0 420.5 L509.0 420.3 L509.9 420.1 L510.9 419.9 L511.9 419.8 L512.8 419.7 L513.9 419.7 L514.9 419.8 L515.8 419.9 L516.8 420.0 L517.8 420.2 L518.7 420.4 L519.6 420.7 L520.5 421.0 L521.3 421.4 L522.1 421.8 L522.9 422.3 L523.5 422.8 L524.1 423.3 L524.7 423.8 L525.2 424.4ZM553.5 418.0 L553.8 418.6 L554.1 419.2 L554.3 419.9 L554.4 420.5 L554.5 421.2 L554.4 421.8 L554.3 422.4 L554.1 423.1 L553.8 423.7 L553.5 424.3 L553.1 424.9 L552.6 425.5 L552.0 426.0 L551.4 426.5 L550.7 427.0 L550.0 427.4 L549.2 427.8 L548.3 428.1 L547.4 428.4 L546.5 428.7 L545.6 428.9 L544.6 429.1 L543.6 429.2 L542.6 429.2 L541.6 429.3 L540.6 429.2 L539.6 429.1 L538.6 429.0 L537.7 428.8 L536.7 428.5 L535.8 428.3 L534.9 427.9 L534.1 427.6 L533.3 427.1 L532.6 426.7 L531.9 426.2 L531.3 425.7 L530.7 425.1 L530.3 424.5 L529.8 423.9 L529.5 423.3 L529.2 422.7 L529.0 422.1 L528.9 421.4 L528.9 420.8 L528.9 420.1 L529.1 419.5 L529.3 418.8 L529.6 418.2 L529.9 417.6 L530.3 417.0 L530.8 416.5 L531.4 415.9 L532.0 415.4 L532.7 415.0 L533.4 414.5 L534.2 414.2 L535.1 413.8 L535.9 413.5 L536.8 413.2 L537.8 413.0 L538.7 412.9 L539.7 412.8 L540.7 412.7 L541.7 412.7 L542.7 412.7 L543.7 412.8 L544.7 413.0 L545.7 413.2 L546.6 413.4 L547.5 413.7 L548.4 414.0 L549.2 414.4 L550.0 414.8 L550.7 415.2 L551.4 415.7 L552.0 416.3 L552.6 416.8 L553.1 417.4ZM581.3 411.0 L581.6 411.6 L581.9 412.2 L582.1 412.8 L582.2 413.5 L582.3 414.1 L582.2 414.8 L582.1 415.4 L581.9 416.0 L581.6 416.7 L581.3 417.3 L580.9 417.8 L580.4 418.4 L579.8 418.9 L579.2 419.4 L578.6 419.9 L577.8 420.3 L577.0 420.7 L576.2 421.1 L575.3 421.4 L574.4 421.6 L573.5 421.8 L572.5 422.0 L571.5 422.1 L570.5 422.2 L569.5 422.2 L568.5 422.2 L567.5 422.1 L566.5 421.9 L565.6 421.7 L564.6 421.5 L563.7 421.2 L562.8 420.9 L562.0 420.5 L561.2 420.1 L560.5 419.6 L559.8 419.1 L559.2 418.6 L558.6 418.1 L558.1 417.5 L557.7 416.9 L557.4 416.3 L557.1 415.7 L556.9 415.0 L556.8 414.4 L556.8 413.7 L556.8 413.1 L556.9 412.4 L557.1 411.8 L557.4 411.2 L557.7 410.6 L558.1 410.0 L558.6 409.5 L559.2 408.9 L559.8 408.4 L560.5 408.0 L561.2 407.5 L562.0 407.1 L562.8 406.8 L563.7 406.5 L564.6 406.2 L565.6 406.0 L566.5 405.9 L567.5 405.8 L568.5 405.7 L569.5 405.7 L570.5 405.7 L571.5 405.8 L572.5 406.0 L573.4 406.2 L574.4 406.4 L575.3 406.7 L576.1 407.0 L577.0 407.4 L577.8 407.8 L578.5 408.2 L579.2 408.7 L579.8 409.2 L580.4 409.8 L580.8 410.4Z" fill="#cc6a28" stroke="#f08a43" stroke-width="0.8"/>
<ellipse cx="280.5" cy="538.1" rx="2.4" ry="0.8" fill="#8d9097"/>
<ellipse cx="270.3" cy="518.6" rx="2.4" ry="0.8" fill="#8d9097"/>
<ellipse cx="260.1" cy="499.4" rx="2.4" ry="0.8" fill="#8d9097"/>
<ellipse cx="250.1" cy="480.4" rx="2.4" ry="0.8" fill="#8d9097"/>
<ellipse cx="240.2" cy="461.6" rx="2.4" ry="0.8" fill="#8d9097"/>
<ellipse cx="457.2" cy="449.4" rx="2.4" ry="0.8" fill="#8d9097"/>
<ellipse cx="485.5" cy="442.3" rx="2.4" ry="0.8" fill="#8d9097"/>
<ellipse cx="513.6" cy="435.2" rx="2.4" ry="0.8" fill="#8d9097"/>
<ellipse cx="541.6" cy="428.1" rx="2.4" ry="0.8" fill="#8d9097"/>
<ellipse cx="569.5" cy="421.0" rx="2.4" ry="0.8" fill="#8d9097"/>
<g clip-path="url(#gridclip)"><text transform="matrix(3.6581 -0.9892 1.6234 2.5611 557.41 649.44)" font-family="Liberation Sans, sans-serif" font-size="8.5" fill="#fbfbfb" stroke="#fbfbfb" stroke-width="0.18" textLength="99.3" lengthAdjust="spacingAndGlyphs" xml:space="preserve">ORIGINAL PRUSA i3 MK3</text></g>
<path d="M69.5 875.6 L488.7 759.3" stroke="#3fb57c" stroke-width="4.6" stroke-linecap="round" fill="none"/>
<path d="M69.5 874.4 L488.7 758.1" stroke="#5fd49a" stroke-width="1.6" stroke-linecap="round" fill="none"/>
<rect x="56" y="105" width="374" height="21" fill="#5e5e5e"/>
<path d="M63.5 110.3 L73 115.8 L63.5 121.3 Z" fill="#ffffff"/>
<text x="80" y="120" font-family="Liberation Sans, sans-serif" font-size="11.3" textLength="37.6" fill="#ffffff">Legend</text>
<rect x="743" y="171" width="10" height="563" fill="#f7f7f7"/>
<rect x="746" y="171" width="4" height="563" fill="#ea7c3c"/>
<polygon points="748.0,161.9 739.9,166.5 739.9,175.8 748.0,180.5 756.1,175.8 756.1,166.5" fill="#ea7c3c" stroke="#ffffff" stroke-width="1.5"/>
<path d="M743.5 171.2 H752.5 M748 166.7 V175.7" stroke="#ffffff" stroke-width="1.5" fill="none"/>
<polygon points="747.8,724.6 739.7,729.2 739.7,738.5 747.8,743.2 755.9,738.5 755.9,729.2" fill="#ea7c3c" stroke="#ffffff" stroke-width="1.5"/>
<path d="M697 137 H728.8 V164.6 L736.4 170.9 H697 Z" fill="#666666"/>
<text font-family="Liberation Sans, sans-serif" font-size="11.3" fill="#ffffff"><tspan x="702.5" y="150.8">5.00</tspan><tspan x="702" y="165.7">(17)</tspan></text>
<path d="M697.2 700.2 H728.7 V723.8 L736.5 733.2 H697.2 Z" fill="#666666"/>
<text font-family="Liberation Sans, sans-serif" font-size="11.3" fill="#ffffff"><tspan x="702.5" y="714">0.20</tspan><tspan x="702" y="729">(1)</tspan></text>
<rect x="278.5" y="793.8" width="292" height="8.2" rx="4.1" fill="#f7f7f7"/>
<rect x="281" y="796" width="288" height="4" rx="2" fill="#ea7c3c"/>
<polygon points="578.5,797.8 573.9,789.7 564.6,789.7 559.9,797.8 564.6,805.9 573.9,805.9" fill="#ea7c3c" stroke="#ffffff" stroke-width="1.5"/>
<path d="M588.5 778.9 H630.4 V797.8 H580.6 L588.5 791.5 Z" fill="#666666"/>
<text x="593.2" y="792.8" font-family="Liberation Sans, sans-serif" font-size="11.3" fill="#ffffff">48935</text>
<g transform="translate(748.2 772.6)"><rect x="-7.7" y="0.9" width="15.4" height="8.2" rx="1.3" fill="#f07019"/><path d="M-4.6 1.2 V-4.2 A2.6 2.6 0 0 1 -2 -6.8 H3.2 A2.6 2.6 0 0 1 5.8 -4.2 V-3.2" fill="none" stroke="#f07019" stroke-width="2.6" stroke-linecap="round"/><path d="M-1.4 3.1 L1.6 4.7 L-1.4 6.3 Z" fill="#8a8a8a"/><rect x="-1" y="7.4" width="2.4" height="1" fill="#c8702e"/></g>
<g transform="translate(747.9 796.8)"><circle cx="6.47" cy="2.68" r="2.5" fill="#fdfcf8"/><circle cx="2.68" cy="6.47" r="2.5" fill="#fdfcf8"/><circle cx="-2.68" cy="6.47" r="2.5" fill="#fdfcf8"/><circle cx="-6.47" cy="2.68" r="2.5" fill="#fdfcf8"/><circle cx="-6.47" cy="-2.68" r="2.5" fill="#fdfcf8"/><circle cx="-2.68" cy="-6.47" r="2.5" fill="#fdfcf8"/><circle cx="2.68" cy="-6.47" r="2.5" fill="#fdfcf8"/><circle cx="6.47" cy="-2.68" r="2.5" fill="#fdfcf8"/><circle r="7.6" fill="#fdfcf8"/><circle r="5.7" fill="#7e8083"/><rect x="-0.9" y="-5.3" width="1.8" height="1.6" fill="#e8702a" transform="rotate(0)"/><rect x="-0.9" y="-5.3" width="1.8" height="1.6" fill="#e8702a" transform="rotate(45)"/><rect x="-0.9" y="-5.3" width="1.8" height="1.6" fill="#e8702a" transform="rotate(90)"/><rect x="-0.9" y="-5.3" width="1.8" height="1.6" fill="#e8702a" transform="rotate(135)"/><rect x="-0.9" y="-5.3" width="1.8" height="1.6" fill="#e8702a" transform="rotate(180)"/><rect x="-0.9" y="-5.3" width="1.8" height="1.6" fill="#e8702a" transform="rotate(225)"/><rect x="-0.9" y="-5.3" width="1.8" height="1.6" fill="#e8702a" transform="rotate(270)"/><rect x="-0.9" y="-5.3" width="1.8" height="1.6" fill="#e8702a" transform="rotate(315)"/><circle r="3.7" fill="none" stroke="#e8702a" stroke-width="1.3"/></g>
<path d="M56 785.4 L66.4 816" stroke="#0b7d0b" stroke-width="3.8" fill="none"/>
<rect x="79.6" y="789" width="4.4" height="28" fill="#00006c"/><path d="M79 774 L85.8 791.8 H74.5 Z" fill="#00006c"/>
<path d="M56 742 H190.5 A3.5 3.5 0 0 1 194 745.5 V817 H56 Z" fill="#000000" fill-opacity="0.52"/>
<path d="M126 742 H190.5 A3.5 3.5 0 0 1 194 745.5 V817 H126 Z" fill="#000000" fill-opacity="0.42"/>
<path d="M56 785.4 L66.4 816" stroke="#0b7d0b" stroke-width="3.8" fill="none" opacity="0.9"/>
<rect x="79.6" y="789" width="4.4" height="28" fill="#00006c"/><path d="M79 774 L85.8 791.8 H74.5 Z" fill="#00006c"/>
<path d="M70.2 768.2 H104.2 V802.1 H70.2 Z M70.2 768.2 L83.8 756.2 H115.8 L104.2 768.2 M115.8 756.2 V790.5 L104.2 802.1" fill="none" stroke="#ffffff" stroke-width="1.5" stroke-linejoin="round"/>
<path d="M134.4 769.2 L147.6 756.8 H179.8 L167.8 769.2 ZM134.4 773.3 H167.8 L179.8 760.9M134.4 777.4 H167.8 L179.8 765.0M134.4 781.6 H167.8 L179.8 769.2M134.4 785.7 H167.8 L179.8 773.3M134.4 789.8 H167.8 L179.8 777.4M134.4 793.9 H167.8 L179.8 781.5M134.4 798.0 H167.8 L179.8 785.6M134.4 802.2 H167.8 L179.8 789.8" fill="none" stroke="#ffffff" stroke-width="1.35" stroke-linejoin="round"/>
</svg>
<div class="abs" style="left:799.6px;top:105px;font-size:11.30px;line-height:14px;color:#262626;letter-spacing:0.229px;">Print settings:</div>
<div class="box" style="left:799.3px;top:120px;width:377.5px;height:24px;"></div>
<div class="abs" style="left:850.7px;top:125px;font-size:11.30px;line-height:14px;color:#262626;letter-spacing:0.021px;">0.30mm QUALITY (modified)</div>
<svg class="abs" style="left:1158.2px;top:129.1px" width="12" height="7" viewBox="0 0 12 7"><path d="M0.6 1.1 L6 5.3 L11.4 1.1" fill="none" stroke="#444444" stroke-width="1.35" stroke-linecap="round" stroke-linejoin="round"/></svg>
<svg class="abs" style="left:830.1px;top:123.9px" width="14" height="16" viewBox="-7 -8 14 16"><path d="M-3.3 -0.6 V-4.6 A1.9 1.9 0 0 1 -1.4 -6.5 H1.4 A1.9 1.9 0 0 1 3.3 -4.6 V-0.6" fill="none" stroke="#ffffff" stroke-width="1.7"/><rect x="-5.8" y="-0.9" width="11.6" height="7.4" rx="1.1" fill="#ffffff"/><path d="M-0.9 1.9 L1.3 3 L-0.9 4.1 Z" fill="#ececec"/></svg>
<svg class="abs" style="left:1179.9px;top:124.2px" width="16" height="16" viewBox="-8 -8 16 16"><circle r="5.9" fill="#ffffff"/><circle cx="5.40" cy="0.00" r="1.9" fill="#ffffff"/><circle cx="3.82" cy="3.82" r="1.9" fill="#ffffff"/><circle cx="0.00" cy="5.40" r="1.9" fill="#ffffff"/><circle cx="-3.82" cy="3.82" r="1.9" fill="#ffffff"/><circle cx="-5.40" cy="0.00" r="1.9" fill="#ffffff"/><circle cx="-3.82" cy="-3.82" r="1.9" fill="#ffffff"/><circle cx="-0.00" cy="-5.40" r="1.9" fill="#ffffff"/><circle cx="3.82" cy="-3.82" r="1.9" fill="#ffffff"/><rect x="-0.75" y="-5" width="1.5" height="1.5" fill="#f26a1b" transform="rotate(22.5)"/><rect x="-0.75" y="-5" width="1.5" height="1.5" fill="#f26a1b" transform="rotate(67.5)"/><rect x="-0.75" y="-5" width="1.5" height="1.5" fill="#f26a1b" transform="rotate(112.5)"/><rect x="-0.75" y="-5" width="1.5" height="1.5" fill="#f26a1b" transform="rotate(157.5)"/><rect x="-0.75" y="-5" width="1.5" height="1.5" fill="#f26a1b" transform="rotate(202.5)"/><rect x="-0.75" y="-5" width="1.5" height="1.5" fill="#f26a1b" transform="rotate(247.5)"/><rect x="-0.75" y="-5" width="1.5" height="1.5" fill="#f26a1b" transform="rotate(292.5)"/><rect x="-0.75" y="-5" width="1.5" height="1.5" fill="#f26a1b" transform="rotate(337.5)"/><circle r="3.55" fill="none" stroke="#f26a1b" stroke-width="1.05"/></svg>
<div class="abs" style="left:799.6px;top:146px;font-size:11.30px;line-height:14px;color:#262626;letter-spacing:0.059px;">Filament:</div>
<div class="box" style="left:799.3px;top:161px;width:377.5px;height:24px;"></div>
<div class="abs" style="left:850.7px;top:166px;font-size:11.30px;line-height:14px;color:#262626;letter-spacing:-0.052px;">Generic PLA</div>
<svg class="abs" style="left:1158.2px;top:169.9px" width="12" height="7" viewBox="0 0 12 7"><path d="M0.6 1.1 L6 5.3 L11.4 1.1" fill="none" stroke="#444444" stroke-width="1.35" stroke-linecap="round" stroke-linejoin="round"/></svg>
<svg class="abs" style="left:830.1px;top:164.7px" width="14" height="16" viewBox="-7 -8 14 16"><path d="M-3.3 -0.6 V-4.6 A1.9 1.9 0 0 1 -1.4 -6.5 H1.4 A1.9 1.9 0 0 1 3.3 -4.6 V-0.6" fill="none" stroke="#ffffff" stroke-width="1.7"/><rect x="-5.8" y="-0.9" width="11.6" height="7.4" rx="1.1" fill="#ffffff"/><path d="M-0.9 1.9 L1.3 3 L-0.9 4.1 Z" fill="#ececec"/></svg>
<svg class="abs" style="left:1179.9px;top:165.0px" width="16" height="16" viewBox="-8 -8 16 16"><circle r="5.9" fill="#ffffff"/><circle cx="5.40" cy="0.00" r="1.9" fill="#ffffff"/><circle cx="3.82" cy="3.82" r="1.9" fill="#ffffff"/><circle cx="0.00" cy="5.40" r="1.9" fill="#ffffff"/><circle cx="-3.82" cy="3.82" r="1.9" fill="#ffffff"/><circle cx="-5.40" cy="0.00" r="1.9" fill="#ffffff"/><circle cx="-3.82" cy="-3.82" r="1.9" fill="#ffffff"/><circle cx="-0.00" cy="-5.40" r="1.9" fill="#ffffff"/><circle cx="3.82" cy="-3.82" r="1.9" fill="#ffffff"/><rect x="-0.75" y="-5" width="1.5" height="1.5" fill="#f26a1b" transform="rotate(22.5)"/><rect x="-0.75" y="-5" width="1.5" height="1.5" fill="#f26a1b" transform="rotate(67.5)"/><rect x="-0.75" y="-5" width="1.5" height="1.5" fill="#f26a1b" transform="rotate(112.5)"/><rect x="-0.75" y="-5" width="1.5" height="1.5" fill="#f26a1b" transform="rotate(157.5)"/><rect x="-0.75" y="-5" width="1.5" height="1.5" fill="#f26a1b" transform="rotate(202.5)"/><rect x="-0.75" y="-5" width="1.5" height="1.5" fill="#f26a1b" transform="rotate(247.5)"/><rect x="-0.75" y="-5" width="1.5" height="1.5" fill="#f26a1b" transform="rotate(292.5)"/><rect x="-0.75" y="-5" width="1.5" height="1.5" fill="#f26a1b" transform="rotate(337.5)"/><circle r="3.55" fill="none" stroke="#f26a1b" stroke-width="1.05"/></svg>
<div class="abs" style="left:799.6px;top:187px;font-size:11.30px;line-height:14px;color:#262626;letter-spacing:0.135px;">Printer:</div>
<div class="box" style="left:799.3px;top:202px;width:377.5px;height:24px;"></div>
<div class="abs" style="left:850.7px;top:207px;font-size:11.30px;line-height:14px;color:#262626;letter-spacing:0.139px;">Original Prusa i3 MK3S &amp; MK3S+ 0.6 nozzle</div>
<svg class="abs" style="left:1158.2px;top:210.9px" width="12" height="7" viewBox="0 0 12 7"><path d="M0.6 1.1 L6 5.3 L11.4 1.1" fill="none" stroke="#444444" stroke-width="1.35" stroke-linecap="round" stroke-linejoin="round"/></svg>
<svg class="abs" style="left:830.1px;top:205.7px" width="14" height="16" viewBox="-7 -8 14 16"><path d="M-3.3 -0.6 V-4.6 A1.9 1.9 0 0 1 -1.4 -6.5 H1.4 A1.9 1.9 0 0 1 3.3 -4.6 V-0.6" fill="none" stroke="#ffffff" stroke-width="1.7"/><rect x="-5.8" y="-0.9" width="11.6" height="7.4" rx="1.1" fill="#ffffff"/><path d="M-0.9 1.9 L1.3 3 L-0.9 4.1 Z" fill="#ececec"/></svg>
<svg class="abs" style="left:1179.9px;top:206.0px" width="16" height="16" viewBox="-8 -8 16 16"><circle r="5.9" fill="#ffffff"/><circle cx="5.40" cy="0.00" r="1.9" fill="#ffffff"/><circle cx="3.82" cy="3.82" r="1.9" fill="#ffffff"/><circle cx="0.00" cy="5.40" r="1.9" fill="#ffffff"/><circle cx="-3.82" cy="3.82" r="1.9" fill="#ffffff"/><circle cx="-5.40" cy="0.00" r="1.9" fill="#ffffff"/><circle cx="-3.82" cy="-3.82" r="1.9" fill="#ffffff"/><circle cx="-0.00" cy="-5.40" r="1.9" fill="#ffffff"/><circle cx="3.82" cy="-3.82" r="1.9" fill="#ffffff"/><rect x="-0.75" y="-5" width="1.5" height="1.5" fill="#f26a1b" transform="rotate(22.5)"/><rect x="-0.75" y="-5" width="1.5" height="1.5" fill="#f26a1b" transform="rotate(67.5)"/><rect x="-0.75" y="-5" width="1.5" height="1.5" fill="#f26a1b" transform="rotate(112.5)"/><rect x="-0.75" y="-5" width="1.5" height="1.5" fill="#f26a1b" transform="rotate(157.5)"/><rect x="-0.75" y="-5" width="1.5" height="1.5" fill="#f26a1b" transform="rotate(202.5)"/><rect x="-0.75" y="-5" width="1.5" height="1.5" fill="#f26a1b" transform="rotate(247.5)"/><rect x="-0.75" y="-5" width="1.5" height="1.5" fill="#f26a1b" transform="rotate(292.5)"/><rect x="-0.75" y="-5" width="1.5" height="1.5" fill="#f26a1b" transform="rotate(337.5)"/><circle r="3.55" fill="none" stroke="#f26a1b" stroke-width="1.05"/></svg>
<svg class="abs" style="left:806.8px;top:123.9px" width="16" height="16" viewBox="-8 -8 16 16"><circle r="5.9" fill="#ffffff"/><circle cx="5.40" cy="0.00" r="1.9" fill="#ffffff"/><circle cx="3.82" cy="3.82" r="1.9" fill="#ffffff"/><circle cx="0.00" cy="5.40" r="1.9" fill="#ffffff"/><circle cx="-3.82" cy="3.82" r="1.9" fill="#ffffff"/><circle cx="-5.40" cy="0.00" r="1.9" fill="#ffffff"/><circle cx="-3.82" cy="-3.82" r="1.9" fill="#ffffff"/><circle cx="-0.00" cy="-5.40" r="1.9" fill="#ffffff"/><circle cx="3.82" cy="-3.82" r="1.9" fill="#ffffff"/><rect x="-0.75" y="-5" width="1.5" height="1.5" fill="#f26a1b" transform="rotate(22.5)"/><rect x="-0.75" y="-5" width="1.5" height="1.5" fill="#f26a1b" transform="rotate(67.5)"/><rect x="-0.75" y="-5" width="1.5" height="1.5" fill="#f26a1b" transform="rotate(112.5)"/><rect x="-0.75" y="-5" width="1.5" height="1.5" fill="#f26a1b" transform="rotate(157.5)"/><rect x="-0.75" y="-5" width="1.5" height="1.5" fill="#f26a1b" transform="rotate(202.5)"/><rect x="-0.75" y="-5" width="1.5" height="1.5" fill="#f26a1b" transform="rotate(247.5)"/><rect x="-0.75" y="-5" width="1.5" height="1.5" fill="#f26a1b" transform="rotate(292.5)"/><rect x="-0.75" y="-5" width="1.5" height="1.5" fill="#f26a1b" transform="rotate(337.5)"/><circle r="3.55" fill="none" stroke="#f26a1b" stroke-width="1.05"/></svg>
<div class="abs" style="left:804.1px;top:166.1px;width:21.9px;height:13.8px;background:#ff7a00;"></div>
<svg class="abs" style="left:807.5px;top:206.5px" width="16" height="16" viewBox="0 0 16 16"><rect x="1" y="1" width="13.4" height="13.2" rx="0.8" fill="none" stroke="#ffffff" stroke-width="1.2"/><rect x="1.6" y="6.2" width="12.2" height="7.4" fill="#f3f3f3"/><path d="M1 6.2 H14.4" stroke="#fff" stroke-width="1"/><rect x="2.4" y="3.2" width="4.2" height="4.4" fill="#f26a1b"/></svg>
<div class="abs" style="left:803.5px;top:234px;font-size:11.30px;line-height:14px;color:#262626;letter-spacing:0.181px;">Supports:</div>
<div class="box" style="left:855px;top:229.4px;width:321.8px;height:23px;"></div>
<div class="abs" style="left:859.4px;top:234px;font-size:11.30px;line-height:14px;color:#262626;letter-spacing:0.034px;">Everywhere</div>
<svg class="abs" style="left:1158.2px;top:238.1px" width="12" height="7" viewBox="0 0 12 7"><path d="M0.6 1.1 L6 5.3 L11.4 1.1" fill="none" stroke="#444444" stroke-width="1.35" stroke-linecap="round" stroke-linejoin="round"/></svg>
<div class="abs" style="left:803.5px;top:261px;font-size:11.30px;line-height:14px;color:#262626;letter-spacing:0.252px;">Infill:</div>
<div class="box" style="left:829.2px;top:256.4px;width:79.6px;height:23.2px;"></div>
<div class="abs" style="left:836.4px;top:261px;font-size:11.30px;line-height:14px;color:#262626;letter-spacing:-0.372px;">15%</div>
<svg class="abs" style="left:890.6px;top:265.0px" width="12" height="7" viewBox="0 0 12 7"><path d="M0.6 1.1 L6 5.3 L11.4 1.1" fill="none" stroke="#444444" stroke-width="1.35" stroke-linecap="round" stroke-linejoin="round"/></svg>
<div class="abs" style="left:932.9px;top:261px;font-size:11.30px;line-height:14px;color:#262626;letter-spacing:0.127px;">Brim:</div>
<div class="abs" style="left:961.4px;top:260.9px;width:13.6px;height:14.2px;border-radius:2px;background:#ff6a13;"></div>
<svg class="abs" style="left:961.4px;top:260.9px" width="14" height="14" viewBox="0 0 14 14"><path d="M3.3 7 L6.1 10 L11 4.2" fill="none" stroke="#ffffff" stroke-width="1.3" stroke-linecap="round" stroke-linejoin="round"/></svg>
<div class="abs" style="left:799.1px;top:282.9px;width:399.6px;height:179px;background:#ffffff;"></div>
<div class="abs" style="left:826.2px;top:289px;font-size:11.30px;line-height:14px;color:#262626;letter-spacing:-0.161px;">Name</div>
<div class="abs" style="left:1113.4px;top:289px;font-size:11.30px;line-height:14px;color:#262626;letter-spacing:0.064px;">Editing</div>
<div class="abs" style="left:1023.2px;top:288px;width:1px;height:16px;background:#dcdcdc;"></div>
<div class="abs" style="left:1070px;top:288px;width:1px;height:16px;background:#dcdcdc;"></div>
<div class="abs" style="left:799.1px;top:309px;width:399.6px;height:1px;background:#ececec;"></div>
<div class="abs" style="left:809.3px;top:315px;width:379.6px;height:17.3px;border-radius:5px;background:#dcdcdc;"></div>
<div class="abs" style="left:824.5px;top:317px;font-size:11.30px;line-height:14px;color:#262626;letter-spacing:0.226px;">Bendlink.stl</div>
<svg class="abs" style="left:1039px;top:317.6px" width="16" height="12" viewBox="0 0 16 12"><path d="M1.2 6.2 C4 1.2 12 1.2 14.8 6.2 C12 11 4 11 1.2 6.2 Z" fill="#ffffff"/><circle cx="8" cy="6.1" r="3.2" fill="#dcdcdc"/><circle cx="8" cy="6.1" r="2" fill="#ffffff"/></svg>
<svg class="abs" style="left:1122px;top:316px" width="18" height="16" viewBox="0 0 18 16"><rect x="2.6" y="5.5" width="9.2" height="8.8" rx="1.6" fill="none" stroke="#ffffff" stroke-width="1.3"/><circle cx="11.5" cy="5.3" r="3.9" fill="#dcdcdc"/><rect x="-0.8" y="-4.1" width="1.6" height="1.6" fill="#f26a1b" transform="translate(11.5 5.3) rotate(0)"/><rect x="-0.8" y="-4.1" width="1.6" height="1.6" fill="#f26a1b" transform="translate(11.5 5.3) rotate(45)"/><rect x="-0.8" y="-4.1" width="1.6" height="1.6" fill="#f26a1b" transform="translate(11.5 5.3) rotate(90)"/><rect x="-0.8" y="-4.1" width="1.6" height="1.6" fill="#f26a1b" transform="translate(11.5 5.3) rotate(135)"/><rect x="-0.8" y="-4.1" width="1.6" height="1.6" fill="#f26a1b" transform="translate(11.5 5.3) rotate(180)"/><rect x="-0.8" y="-4.1" width="1.6" height="1.6" fill="#f26a1b" transform="translate(11.5 5.3) rotate(225)"/><rect x="-0.8" y="-4.1" width="1.6" height="1.6" fill="#f26a1b" transform="translate(11.5 5.3) rotate(270)"/><rect x="-0.8" y="-4.1" width="1.6" height="1.6" fill="#f26a1b" transform="translate(11.5 5.3) rotate(315)"/><circle cx="11.5" cy="5.3" r="2.55" fill="none" stroke="#f26a1b" stroke-width="1.3"/></svg>
<div class="abs" style="left:814.7px;top:467px;font-size:11.30px;line-height:14px;color:#262626;letter-spacing:0.270px;">Object manipulation</div>
<div class="grp" style="left:799.1px;top:481px;width:399.6px;height:169.5px;"></div>
<div class="box" style="left:810.3px;top:489.3px;width:149px;height:23px;"></div>
<div class="abs" style="left:814.4px;top:494px;font-size:11.30px;line-height:14px;color:#262626;letter-spacing:0.243px;">World coordinates</div>
<svg class="abs" style="left:941.8px;top:498.0px" width="12" height="7" viewBox="0 0 12 7"><path d="M0.6 1.1 L6 5.3 L11.4 1.1" fill="none" stroke="#444444" stroke-width="1.35" stroke-linecap="round" stroke-linejoin="round"/></svg>
<div class="abs" style="left:979.0px;top:494px;font-size:11.30px;line-height:14px;color:#1a1a1a;font-weight:bold;">X</div>
<svg class="abs" style="left:989.0px;top:494.3px" width="15" height="13" viewBox="0 0 15 13"><path d="M4 1.2 H1.2 V11.4 H4 M10 1.2 H12.8 V11.4 H10" fill="none" stroke="#1a1a1a" stroke-width="1.8"/><path d="M7 0.2 V12.4" stroke="#1a1a1a" stroke-width="1.1" stroke-dasharray="1.8 1.5"/></svg>
<div class="abs" style="left:1041.6px;top:494px;font-size:11.30px;line-height:14px;color:#1a1a1a;font-weight:bold;">Y</div>
<svg class="abs" style="left:1050.8px;top:494.3px" width="15" height="13" viewBox="0 0 15 13"><path d="M4 1.2 H1.2 V11.4 H4 M10 1.2 H12.8 V11.4 H10" fill="none" stroke="#1a1a1a" stroke-width="1.8"/><path d="M7 0.2 V12.4" stroke="#1a1a1a" stroke-width="1.1" stroke-dasharray="1.8 1.5"/></svg>
<div class="abs" style="left:1102.2px;top:494px;font-size:11.30px;line-height:14px;color:#1a1a1a;font-weight:bold;">Z</div>
<svg class="abs" style="left:1111.7px;top:494.3px" width="15" height="13" viewBox="0 0 15 13"><path d="M4 1.2 H1.2 V11.4 H4 M10 1.2 H12.8 V11.4 H10" fill="none" stroke="#1a1a1a" stroke-width="1.8"/><path d="M7 0.2 V12.4" stroke="#1a1a1a" stroke-width="1.1" stroke-dasharray="1.8 1.5"/></svg>
<div class="abs" style="left:810.3px;top:519px;font-size:11.30px;line-height:14px;color:#262626;letter-spacing:0.018px;">Position:</div>
<div class="box" style="left:963.0px;top:516.4px;width:57.6px;height:23px;border-color:#6a6a6a;"></div>
<div class="abs" style="left:970.5px;top:520px;font-size:11.30px;line-height:14px;color:#262626;">122.26</div>
<div class="box" style="left:1024.0px;top:516.4px;width:57.6px;height:23px;border-color:#6a6a6a;"></div>
<div class="abs" style="left:1031.5px;top:520px;font-size:11.30px;line-height:14px;color:#262626;">103.63</div>
<div class="box" style="left:1085.3px;top:516.4px;width:57.6px;height:23px;border-color:#6a6a6a;"></div>
<div class="abs" style="left:1092.8px;top:520px;font-size:11.30px;line-height:14px;color:#262626;">2.5</div>
<div class="abs" style="left:1146.2px;top:519px;font-size:11.30px;line-height:14px;color:#262626;">mm</div>
<div class="abs" style="left:810.3px;top:543px;font-size:11.30px;line-height:14px;color:#262626;letter-spacing:0.221px;">Rotate (relative):</div>
<div class="box" style="left:963.0px;top:543.5px;width:57.6px;height:23px;border-color:#6a6a6a;"></div>
<div class="abs" style="left:970.5px;top:547px;font-size:11.30px;line-height:14px;color:#262626;">0</div>
<div class="box" style="left:1024.0px;top:543.5px;width:57.6px;height:23px;border-color:#6a6a6a;"></div>
<div class="abs" style="left:1031.5px;top:547px;font-size:11.30px;line-height:14px;color:#262626;">0</div>
<div class="box" style="left:1085.3px;top:543.5px;width:57.6px;height:23px;border-color:#6a6a6a;"></div>
<div class="abs" style="left:1092.8px;top:547px;font-size:11.30px;line-height:14px;color:#262626;">0</div>
<div class="abs" style="left:1146.2px;top:546px;font-size:11.30px;line-height:14px;color:#262626;">°</div>
<div class="abs" style="left:826.2px;top:567px;font-size:11.30px;line-height:14px;color:#262626;letter-spacing:0.217px;">Scale factors:</div>
<div class="box" style="left:963.0px;top:570.2px;width:57.6px;height:23px;border-color:#6a6a6a;"></div>
<div class="abs" style="left:970.5px;top:574px;font-size:11.30px;line-height:14px;color:#262626;">100</div>
<div class="box" style="left:1024.0px;top:570.2px;width:57.6px;height:23px;border-color:#6a6a6a;"></div>
<div class="abs" style="left:1031.5px;top:574px;font-size:11.30px;line-height:14px;color:#262626;">100</div>
<div class="box" style="left:1085.3px;top:570.2px;width:57.6px;height:23px;border-color:#6a6a6a;"></div>
<div class="abs" style="left:1092.8px;top:574px;font-size:11.30px;line-height:14px;color:#262626;">100</div>
<div class="abs" style="left:1146.2px;top:573px;font-size:11.30px;line-height:14px;color:#262626;">%</div>
<div class="abs" style="left:826.2px;top:591px;font-size:11.30px;line-height:14px;color:#262626;letter-spacing:0.243px;">Size [World]:</div>
<div class="box" style="left:963.0px;top:597.3px;width:57.6px;height:23px;border-color:#6a6a6a;"></div>
<div class="abs" style="left:970.5px;top:601px;font-size:11.30px;line-height:14px;color:#262626;">93.85</div>
<div class="box" style="left:1024.0px;top:597.3px;width:57.6px;height:23px;border-color:#6a6a6a;"></div>
<div class="abs" style="left:1031.5px;top:601px;font-size:11.30px;line-height:14px;color:#262626;">39.94</div>
<div class="box" style="left:1085.3px;top:597.3px;width:57.6px;height:23px;border-color:#6a6a6a;"></div>
<div class="abs" style="left:1092.8px;top:601px;font-size:11.30px;line-height:14px;color:#262626;">5</div>
<div class="abs" style="left:1146.2px;top:600px;font-size:11.30px;line-height:14px;color:#262626;">mm</div>
<svg class="abs" style="left:811.0px;top:577.2px" width="14" height="16" viewBox="-7 -8 14 16"><path d="M-3.3 -0.6 V-4.6 A1.9 1.9 0 0 1 -1.4 -6.5 H1.4 A1.9 1.9 0 0 1 3.3 -4.6 V-0.6" fill="none" stroke="#ffffff" stroke-width="1.7"/><rect x="-5.8" y="-0.9" width="11.6" height="7.4" rx="1.1" fill="#ffffff"/><path d="M-0.9 1.9 L1.3 3 L-0.9 4.1 Z" fill="#ececec"/></svg>
<div class="abs" style="left:811px;top:625.1px;width:13.5px;height:13.5px;box-sizing:border-box;border:1px solid #8c8c8c;background:#f3f2f1;"></div>
<div class="abs" style="left:828.3px;top:625px;font-size:11.30px;line-height:14px;color:#8a8a8a;letter-spacing:0.118px;">Inches</div>
<div class="abs" style="left:810.3px;top:656px;font-size:11.30px;line-height:14px;color:#262626;letter-spacing:0.038px;">Info</div>
<div class="grp" style="left:799.1px;top:670.5px;width:399.6px;height:68.7px;"></div>
<div class="abs" style="left:810.3px;top:678px;font-size:11.30px;line-height:14px;color:#262626;letter-spacing:-0.024px;">Size:</div>
<div class="abs" style="left:863.1px;top:678px;font-size:11.30px;line-height:14px;color:#262626;letter-spacing:0.305px;">93.85 x 39.94 x 5.00</div>
<div class="abs" style="left:987.4px;top:678px;font-size:11.30px;line-height:14px;color:#262626;letter-spacing:0.095px;">Volume:</div>
<div class="abs" style="left:1045.3px;top:678px;font-size:11.30px;line-height:14px;color:#262626;letter-spacing:-0.264px;">1917.90</div>
<div class="abs" style="left:810.3px;top:697px;font-size:11.30px;line-height:14px;color:#262626;letter-spacing:0.064px;">Facets:</div>
<div class="abs" style="left:863.1px;top:697px;font-size:11.30px;line-height:14px;color:#262626;letter-spacing:0.178px;">588 (1 shell)</div>
<div class="abs" style="left:812.3px;top:715px;font-size:11.30px;line-height:14px;color:#262626;letter-spacing:0.301px;">No errors detected</div>
<div class="abs" style="left:810.3px;top:745px;font-size:11.30px;line-height:14px;color:#262626;letter-spacing:0.203px;">Sliced Info</div>
<div class="grp" style="left:799.1px;top:759.2px;width:399.6px;height:60px;"></div>
<div class="abs" style="left:810.3px;top:767px;font-size:11.30px;line-height:14px;color:#262626;letter-spacing:0.159px;">Used Filament (g)</div>
<div class="abs" style="left:951.5px;top:767px;font-size:11.30px;line-height:14px;color:#262626;letter-spacing:0.252px;">2.88</div>
<div class="abs" style="left:795px;top:785.6px;width:419px;height:31px;background:#f4f3f2;"></div>
<div class="abs" style="left:798.5px;top:790.7px;width:411.4px;height:20.3px;border-radius:5px;background:#ffffff;box-shadow:0 0.5px 1.5px rgba(0,0,0,0.28);"></div>
<div class="abs" style="left:963.4px;top:794px;font-size:11.60px;line-height:14px;color:#262626;font-weight:bold;letter-spacing:0.083px;">Export G-code</div>
<div class="abs" style="left:1199.7px;top:104px;width:15px;height:682px;background:#f8f7f6;"></div>
<div class="abs" style="left:1203.8px;top:107px;width:7.2px;height:578px;border-radius:3.6px;background:#7b7b7b;"></div>
</div>
</body></html>
